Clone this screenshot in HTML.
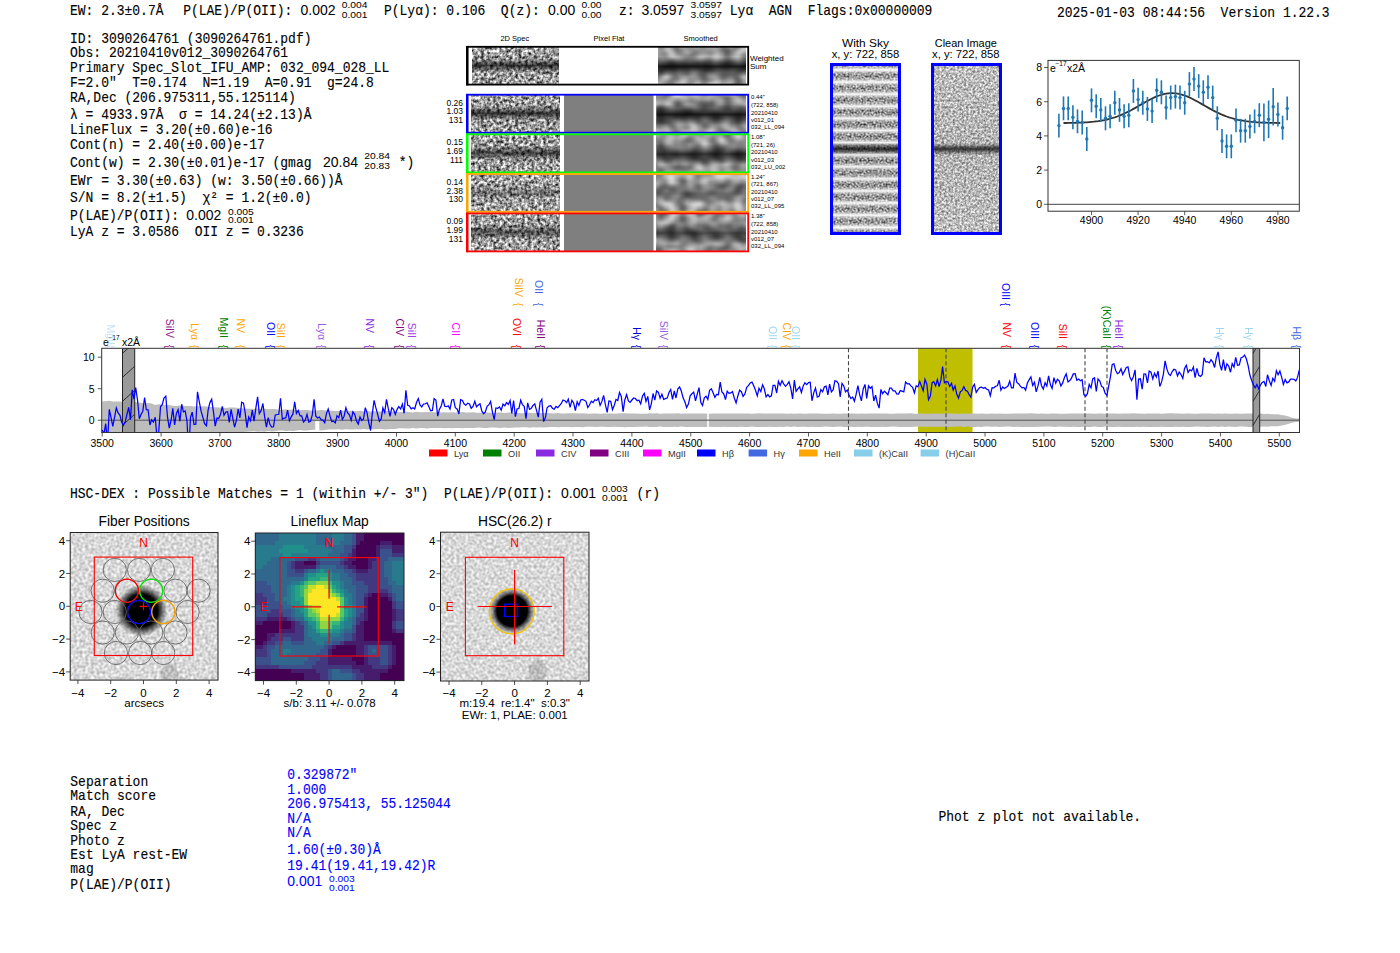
<!DOCTYPE html><html><head><meta charset="utf-8"><style>html,body{margin:0;padding:0;background:#fff;}svg{display:block} text{white-space:pre}</style></head><body>
<svg width="1400" height="953" viewBox="0 0 1400 953">
<rect width="1400" height="953" fill="#fff"/>
<text transform="translate(70,14.5) scale(1,1.09)" font-family="Liberation Mono, monospace" font-size="13" fill="#000" stroke="#000" stroke-width="0.12" >EW: 2.3±0.7Å</text><text transform="translate(183.2,14.5) scale(1,1.09)" font-family="Liberation Mono, monospace" font-size="13" fill="#000" stroke="#000" stroke-width="0.12" >P(LAE)/P(OII):</text><text x="300.5" y="14.5" font-family="Liberation Sans, sans-serif" font-size="14" fill="#000" text-anchor="start" >0.002</text><text x="341.7" y="8.0" font-family="Liberation Sans, sans-serif" font-size="9.5" fill="#000" text-anchor="start" textLength="25.8" lengthAdjust="spacingAndGlyphs">0.004</text><text x="341.7" y="17.7" font-family="Liberation Sans, sans-serif" font-size="9.5" fill="#000" text-anchor="start" textLength="25.8" lengthAdjust="spacingAndGlyphs">0.001</text><text transform="translate(384,14.5) scale(1,1.09)" font-family="Liberation Mono, monospace" font-size="13" fill="#000" stroke="#000" stroke-width="0.12" >P(Lyα): 0.106  Q(z):</text><text x="548" y="14.5" font-family="Liberation Sans, sans-serif" font-size="14" fill="#000" text-anchor="start" >0.00</text><text x="581.6" y="8.2" font-family="Liberation Sans, sans-serif" font-size="9.5" fill="#000" text-anchor="start" textLength="20.0" lengthAdjust="spacingAndGlyphs">0.00</text><text x="581.6" y="18.099999999999998" font-family="Liberation Sans, sans-serif" font-size="9.5" fill="#000" text-anchor="start" textLength="20.0" lengthAdjust="spacingAndGlyphs">0.00</text><text transform="translate(619,14.5) scale(1,1.09)" font-family="Liberation Mono, monospace" font-size="13" fill="#000" stroke="#000" stroke-width="0.12" >z:</text><text x="641.4" y="14.5" font-family="Liberation Sans, sans-serif" font-size="14" fill="#000" text-anchor="start" >3.0597</text><text x="690.5" y="8.2" font-family="Liberation Sans, sans-serif" font-size="9.5" fill="#000" text-anchor="start" textLength="31.5" lengthAdjust="spacingAndGlyphs">3.0597</text><text x="690.5" y="18.099999999999998" font-family="Liberation Sans, sans-serif" font-size="9.5" fill="#000" text-anchor="start" textLength="31.5" lengthAdjust="spacingAndGlyphs">3.0597</text><text transform="translate(729.8,14.5) scale(1,1.09)" font-family="Liberation Mono, monospace" font-size="13" fill="#000" stroke="#000" stroke-width="0.12" >Lyα  AGN  Flags:0x00000009</text><text transform="translate(1057,16.8) scale(1,1.09)" font-family="Liberation Mono, monospace" font-size="13" fill="#000" stroke="#000" stroke-width="0.12" >2025-01-03 08:44:56  Version 1.22.3</text><text transform="translate(70,42.6) scale(1,1.09)" font-family="Liberation Mono, monospace" font-size="13" fill="#000" stroke="#000" stroke-width="0.12" >ID: 3090264761 (3090264761.pdf)</text><text transform="translate(70,57.0) scale(1,1.09)" font-family="Liberation Mono, monospace" font-size="13" fill="#000" stroke="#000" stroke-width="0.12" >Obs: 20210410v012_3090264761</text><text transform="translate(70,71.8) scale(1,1.09)" font-family="Liberation Mono, monospace" font-size="13" fill="#000" stroke="#000" stroke-width="0.12" >Primary Spec_Slot_IFU_AMP: 032_094_028_LL</text><text transform="translate(70,86.7) scale(1,1.09)" font-family="Liberation Mono, monospace" font-size="13" fill="#000" stroke="#000" stroke-width="0.12" >F=2.0"  T=0.174  N=1.19  A=0.91  g=24.8</text><text transform="translate(70,101.5) scale(1,1.09)" font-family="Liberation Mono, monospace" font-size="13" fill="#000" stroke="#000" stroke-width="0.12" >RA,Dec (206.975311,55.125114)</text><text transform="translate(70,118.5) scale(1,1.09)" font-family="Liberation Mono, monospace" font-size="13" fill="#000" stroke="#000" stroke-width="0.12" >λ = 4933.97Å  σ = 14.24(±2.13)Å</text><text transform="translate(70,133.7) scale(1,1.09)" font-family="Liberation Mono, monospace" font-size="13" fill="#000" stroke="#000" stroke-width="0.12" >LineFlux = 3.20(±0.60)e-16</text><text transform="translate(70,148.5) scale(1,1.09)" font-family="Liberation Mono, monospace" font-size="13" fill="#000" stroke="#000" stroke-width="0.12" >Cont(n) = 2.40(±0.00)e-17</text><text transform="translate(70,166.7) scale(1,1.09)" font-family="Liberation Mono, monospace" font-size="13" fill="#000" stroke="#000" stroke-width="0.12" >Cont(w) = 2.30(±0.01)e-17 (gmag</text><text transform="translate(70,184.9) scale(1,1.09)" font-family="Liberation Mono, monospace" font-size="13" fill="#000" stroke="#000" stroke-width="0.12" >EWr = 3.30(±0.63) (w: 3.50(±0.66))Å</text><text transform="translate(70,202.0) scale(1,1.09)" font-family="Liberation Mono, monospace" font-size="13" fill="#000" stroke="#000" stroke-width="0.12" >S/N = 8.2(±1.5)  χ² = 1.2(±0.0)</text><text transform="translate(70,219.6) scale(1,1.09)" font-family="Liberation Mono, monospace" font-size="13" fill="#000" stroke="#000" stroke-width="0.12" >P(LAE)/P(OII):</text><text transform="translate(70,236.4) scale(1,1.09)" font-family="Liberation Mono, monospace" font-size="13" fill="#000" stroke="#000" stroke-width="0.12" >LyA z = 3.0586  OII z = 0.3236</text><text x="323" y="166.7" font-family="Liberation Sans, sans-serif" font-size="14" fill="#000" text-anchor="start" >20.84</text><text x="364.2" y="159.4" font-family="Liberation Sans, sans-serif" font-size="9.5" fill="#000" text-anchor="start" textLength="25.8" lengthAdjust="spacingAndGlyphs">20.84</text><text x="364.2" y="169.20000000000002" font-family="Liberation Sans, sans-serif" font-size="9.5" fill="#000" text-anchor="start" textLength="25.8" lengthAdjust="spacingAndGlyphs">20.83</text><text transform="translate(391,166.7) scale(1,1.09)" font-family="Liberation Mono, monospace" font-size="13" fill="#000" stroke="#000" stroke-width="0.12" > *)</text><text x="186.3" y="219.6" font-family="Liberation Sans, sans-serif" font-size="14" fill="#000" text-anchor="start" >0.002</text><text x="228" y="214.6" font-family="Liberation Sans, sans-serif" font-size="9.5" fill="#000" text-anchor="start" textLength="25.8" lengthAdjust="spacingAndGlyphs">0.005</text><text x="228" y="223.4" font-family="Liberation Sans, sans-serif" font-size="9.5" fill="#000" text-anchor="start" textLength="25.8" lengthAdjust="spacingAndGlyphs">0.001</text><defs>
<filter id="nz" x="0" y="0" width="1" height="1" color-interpolation-filters="sRGB">
 <feTurbulence type="fractalNoise" baseFrequency="0.32" numOctaves="2" seed="4"/>
 <feColorMatrix type="matrix" values="1 0 0 0 0 1 0 0 0 0 1 0 0 0 0 0 0 0 0 1"/>
 <feComponentTransfer><feFuncR type="linear" slope="1.7" intercept="-0.22"/><feFuncG type="linear" slope="1.7" intercept="-0.22"/><feFuncB type="linear" slope="1.7" intercept="-0.22"/></feComponentTransfer>
</filter>
<filter id="nzs" x="0" y="0" width="1" height="1" color-interpolation-filters="sRGB">
 <feTurbulence type="fractalNoise" baseFrequency="0.09 0.11" numOctaves="1" seed="9"/>
 <feColorMatrix type="matrix" values="1 0 0 0 0 1 0 0 0 0 1 0 0 0 0 0 0 0 0 1"/>
 <feComponentTransfer><feFuncR type="linear" slope="0.9" intercept="0.17"/><feFuncG type="linear" slope="0.9" intercept="0.17"/><feFuncB type="linear" slope="0.9" intercept="0.17"/></feComponentTransfer>
</filter>
<filter id="nzf" x="0" y="0" width="1" height="1" color-interpolation-filters="sRGB">
 <feTurbulence type="fractalNoise" baseFrequency="0.45" numOctaves="2" seed="2"/>
 <feColorMatrix type="matrix" values="1 0 0 0 0 1 0 0 0 0 1 0 0 0 0 0 0 0 0 1"/>
 <feComponentTransfer><feFuncR type="linear" slope="0.95" intercept="0.27"/><feFuncG type="linear" slope="0.95" intercept="0.27"/><feFuncB type="linear" slope="0.95" intercept="0.27"/></feComponentTransfer>
</filter>
<filter id="nzk" x="0" y="0" width="1" height="1" color-interpolation-filters="sRGB">
 <feTurbulence type="fractalNoise" baseFrequency="0.5" numOctaves="1" seed="6"/>
 <feColorMatrix type="matrix" values="1 0 0 0 0 1 0 0 0 0 1 0 0 0 0 0 0 0 0 1"/>
 <feComponentTransfer><feFuncR type="linear" slope="1.3" intercept="-0.1"/><feFuncG type="linear" slope="1.3" intercept="-0.1"/><feFuncB type="linear" slope="1.3" intercept="-0.1"/></feComponentTransfer>
</filter>
<linearGradient id="band" x1="0" y1="0" x2="0" y2="1">
 <stop offset="0" stop-color="#000" stop-opacity="0"/>
 <stop offset="0.3" stop-color="#000" stop-opacity="0.05"/>
 <stop offset="0.49" stop-color="#000" stop-opacity="0.72"/>
 <stop offset="0.68" stop-color="#000" stop-opacity="0.05"/>
 <stop offset="1" stop-color="#000" stop-opacity="0"/>
</linearGradient>
<linearGradient id="bandS" x1="0" y1="0" x2="0" y2="1">
 <stop offset="0" stop-color="#000" stop-opacity="0"/>
 <stop offset="0.25" stop-color="#000" stop-opacity="0.08"/>
 <stop offset="0.4" stop-color="#000" stop-opacity="0.55"/>
 <stop offset="0.52" stop-color="#000" stop-opacity="0.85"/>
 <stop offset="0.64" stop-color="#000" stop-opacity="0.55"/>
 <stop offset="0.8" stop-color="#000" stop-opacity="0.08"/>
 <stop offset="1" stop-color="#000" stop-opacity="0"/>
</linearGradient>
<linearGradient id="bandW" x1="0" y1="0" x2="0" y2="1">
 <stop offset="0" stop-color="#000" stop-opacity="0"/>
 <stop offset="0.465" stop-color="#000" stop-opacity="0.05"/>
 <stop offset="0.5" stop-color="#000" stop-opacity="0.75"/>
 <stop offset="0.535" stop-color="#000" stop-opacity="0.05"/>
 <stop offset="1" stop-color="#000" stop-opacity="0"/>
</linearGradient>
<linearGradient id="sky" gradientUnits="userSpaceOnUse" x1="0" y1="76" x2="0" y2="88.1" spreadMethod="repeat">
 <stop offset="0" stop-color="#fff" stop-opacity="0"/>
 <stop offset="0.25" stop-color="#fff" stop-opacity="0.3"/>
 <stop offset="0.5" stop-color="#fff" stop-opacity="1"/>
 <stop offset="0.75" stop-color="#fff" stop-opacity="0.3"/>
 <stop offset="1" stop-color="#fff" stop-opacity="0"/>
</linearGradient>
</defs><text x="514.8" y="41.3" font-family="Liberation Sans, sans-serif" font-size="7.5" fill="#000" text-anchor="middle" >2D Spec</text><text x="609" y="41.3" font-family="Liberation Sans, sans-serif" font-size="7.5" fill="#000" text-anchor="middle" >Pixel Flat</text><text x="700.7" y="41.3" font-family="Liberation Sans, sans-serif" font-size="7.5" fill="#000" text-anchor="middle" >Smoothed</text><rect x="472" y="47.5" width="87" height="36.5" filter="url(#nz)"/><rect x="472" y="47.5" width="87" height="36.5" fill="url(#band)" opacity="1.0"/><rect x="658" y="47.5" width="88" height="36.5" filter="url(#nzs)"/><rect x="658" y="47.5" width="88" height="36.5" fill="url(#bandS)" opacity="1.0"/><rect x="467.2" y="46.8" width="281" height="37.8" fill="none" stroke="#000" stroke-width="1.8"/><rect x="466" y="46" width="2.5" height="39.4" fill="#000"/><text x="750" y="60.6" font-family="Liberation Sans, sans-serif" font-size="8" fill="#000" text-anchor="start" >Weighted</text><text x="750" y="69.1" font-family="Liberation Sans, sans-serif" font-size="8" fill="#000" text-anchor="start" >Sum</text><rect x="471" y="94.9" width="89" height="37.599999999999994" filter="url(#nz)"/><rect x="471" y="94.9" width="89" height="37.599999999999994" fill="url(#band)" opacity="1.0"/><rect x="564" y="94.9" width="89.5" height="37.599999999999994" fill="#7f7f7f"/><rect x="656.5" y="94.9" width="89.5" height="37.599999999999994" filter="url(#nzs)"/><rect x="656.5" y="94.9" width="89.5" height="37.599999999999994" fill="url(#bandS)" opacity="1.0"/><rect x="471" y="134.5" width="89" height="37.69999999999999" filter="url(#nz)"/><rect x="471" y="134.5" width="89" height="37.69999999999999" fill="url(#band)" opacity="0.9"/><rect x="564" y="134.5" width="89.5" height="37.69999999999999" fill="#7f7f7f"/><rect x="656.5" y="134.5" width="89.5" height="37.69999999999999" filter="url(#nzs)"/><rect x="656.5" y="134.5" width="89.5" height="37.69999999999999" fill="url(#bandS)" opacity="0.9"/><rect x="471" y="174.2" width="89" height="37.400000000000006" filter="url(#nz)"/><rect x="471" y="174.2" width="89" height="37.400000000000006" fill="url(#band)" opacity="0.45"/><rect x="564" y="174.2" width="89.5" height="37.400000000000006" fill="#7f7f7f"/><rect x="656.5" y="174.2" width="89.5" height="37.400000000000006" filter="url(#nzs)"/><rect x="656.5" y="174.2" width="89.5" height="37.400000000000006" fill="url(#bandS)" opacity="0.45"/><rect x="471" y="213.6" width="89" height="37.599999999999994" filter="url(#nz)"/><rect x="471" y="213.6" width="89" height="37.599999999999994" fill="url(#band)" opacity="0.75"/><rect x="564" y="213.6" width="89.5" height="37.599999999999994" fill="#7f7f7f"/><rect x="656.5" y="213.6" width="89.5" height="37.599999999999994" filter="url(#nzs)"/><rect x="656.5" y="213.6" width="89.5" height="37.599999999999994" fill="url(#bandS)" opacity="0.75"/><rect x="467.2" y="94.7" width="281" height="37.99999999999999" fill="none" stroke="#0000ff" stroke-width="1.8"/><rect x="466" y="93.9" width="2.5" height="39.599999999999994" fill="#0000ff"/><text x="463" y="105.60000000000001" font-family="Liberation Sans, sans-serif" font-size="8.5" fill="#000" text-anchor="end" >0.26</text><text x="463" y="114.30000000000001" font-family="Liberation Sans, sans-serif" font-size="8.5" fill="#000" text-anchor="end" >1.03</text><text x="463" y="123.0" font-family="Liberation Sans, sans-serif" font-size="8.5" fill="#000" text-anchor="end" >131</text><text x="751" y="99.4" font-family="Liberation Sans, sans-serif" font-size="6" fill="#000" text-anchor="start" >0.44"</text><text x="751" y="107.0" font-family="Liberation Sans, sans-serif" font-size="6" fill="#000" text-anchor="start" >(722, 858)</text><text x="751" y="114.80000000000001" font-family="Liberation Sans, sans-serif" font-size="6" fill="#000" text-anchor="start" >20210410</text><text x="751" y="122.0" font-family="Liberation Sans, sans-serif" font-size="6" fill="#000" text-anchor="start" >v012_01</text><text x="751" y="129.0" font-family="Liberation Sans, sans-serif" font-size="6" fill="#000" text-anchor="start" >032_LL_094</text><rect x="467.2" y="134.3" width="281" height="38.09999999999999" fill="none" stroke="#00ff00" stroke-width="1.8"/><rect x="466" y="133.5" width="2.5" height="39.69999999999999" fill="#00ff00"/><text x="463" y="145.2" font-family="Liberation Sans, sans-serif" font-size="8.5" fill="#000" text-anchor="end" >0.15</text><text x="463" y="153.89999999999998" font-family="Liberation Sans, sans-serif" font-size="8.5" fill="#000" text-anchor="end" >1.69</text><text x="463" y="162.6" font-family="Liberation Sans, sans-serif" font-size="8.5" fill="#000" text-anchor="end" >111</text><text x="751" y="139.0" font-family="Liberation Sans, sans-serif" font-size="6" fill="#000" text-anchor="start" >1.08"</text><text x="751" y="146.6" font-family="Liberation Sans, sans-serif" font-size="6" fill="#000" text-anchor="start" >(721, 26)</text><text x="751" y="154.4" font-family="Liberation Sans, sans-serif" font-size="6" fill="#000" text-anchor="start" >20210410</text><text x="751" y="161.6" font-family="Liberation Sans, sans-serif" font-size="6" fill="#000" text-anchor="start" >v012_03</text><text x="751" y="168.6" font-family="Liberation Sans, sans-serif" font-size="6" fill="#000" text-anchor="start" >032_LU_002</text><rect x="467.2" y="174.0" width="281" height="37.800000000000004" fill="none" stroke="#ffa500" stroke-width="1.8"/><rect x="466" y="173.2" width="2.5" height="39.400000000000006" fill="#ffa500"/><text x="463" y="184.89999999999998" font-family="Liberation Sans, sans-serif" font-size="8.5" fill="#000" text-anchor="end" >0.14</text><text x="463" y="193.59999999999997" font-family="Liberation Sans, sans-serif" font-size="8.5" fill="#000" text-anchor="end" >2.38</text><text x="463" y="202.29999999999998" font-family="Liberation Sans, sans-serif" font-size="8.5" fill="#000" text-anchor="end" >130</text><text x="751" y="178.7" font-family="Liberation Sans, sans-serif" font-size="6" fill="#000" text-anchor="start" >1.24"</text><text x="751" y="186.29999999999998" font-family="Liberation Sans, sans-serif" font-size="6" fill="#000" text-anchor="start" >(721, 867)</text><text x="751" y="194.1" font-family="Liberation Sans, sans-serif" font-size="6" fill="#000" text-anchor="start" >20210410</text><text x="751" y="201.29999999999998" font-family="Liberation Sans, sans-serif" font-size="6" fill="#000" text-anchor="start" >v012_07</text><text x="751" y="208.29999999999998" font-family="Liberation Sans, sans-serif" font-size="6" fill="#000" text-anchor="start" >032_LL_095</text><rect x="467.2" y="213.4" width="281" height="37.99999999999999" fill="none" stroke="#ff0000" stroke-width="1.8"/><rect x="466" y="212.6" width="2.5" height="39.599999999999994" fill="#ff0000"/><text x="463" y="224.29999999999998" font-family="Liberation Sans, sans-serif" font-size="8.5" fill="#000" text-anchor="end" >0.09</text><text x="463" y="232.99999999999997" font-family="Liberation Sans, sans-serif" font-size="8.5" fill="#000" text-anchor="end" >1.99</text><text x="463" y="241.7" font-family="Liberation Sans, sans-serif" font-size="8.5" fill="#000" text-anchor="end" >131</text><text x="751" y="218.1" font-family="Liberation Sans, sans-serif" font-size="6" fill="#000" text-anchor="start" >1.38"</text><text x="751" y="225.7" font-family="Liberation Sans, sans-serif" font-size="6" fill="#000" text-anchor="start" >(722, 858)</text><text x="751" y="233.5" font-family="Liberation Sans, sans-serif" font-size="6" fill="#000" text-anchor="start" >20210410</text><text x="751" y="240.7" font-family="Liberation Sans, sans-serif" font-size="6" fill="#000" text-anchor="start" >v012_07</text><text x="751" y="247.7" font-family="Liberation Sans, sans-serif" font-size="6" fill="#000" text-anchor="start" >032_LL_094</text><text x="865.4" y="47.3" font-family="Liberation Sans, sans-serif" font-size="11" fill="#000" text-anchor="middle" textLength="47" lengthAdjust="spacingAndGlyphs">With Sky</text><text x="865.4" y="57.7" font-family="Liberation Sans, sans-serif" font-size="11" fill="#000" text-anchor="middle" textLength="67.5" lengthAdjust="spacingAndGlyphs">x, y: 722, 858</text><text x="965.8" y="47.3" font-family="Liberation Sans, sans-serif" font-size="11" fill="#000" text-anchor="middle" textLength="62" lengthAdjust="spacingAndGlyphs">Clean Image</text><text x="965.8" y="57.7" font-family="Liberation Sans, sans-serif" font-size="11" fill="#000" text-anchor="middle" textLength="67.5" lengthAdjust="spacingAndGlyphs">x, y: 722, 858</text><rect x="832" y="65" width="67" height="168" filter="url(#nzk)"/><rect x="832" y="65" width="67" height="168" fill="url(#sky)"/><rect x="832" y="65" width="67" height="168" fill="url(#bandW)"/><rect x="831.5" y="64.5" width="68" height="169" fill="none" stroke="#0000ff" stroke-width="3"/><rect x="932.5" y="65" width="67" height="168" filter="url(#nzf)"/><rect x="932.5" y="65" width="67" height="168" fill="url(#bandW)"/><rect x="932.5" y="64.5" width="68" height="169" fill="none" stroke="#0000ff" stroke-width="3"/><rect x="1048" y="60.4" width="251.29999999999995" height="150.79999999999998" fill="#fff" stroke="#333" stroke-width="1"/><line x1="1048" y1="204.3" x2="1299.3" y2="204.3" stroke="#444" stroke-width="1"/><line x1="1044" y1="204.3" x2="1048" y2="204.3" stroke="#333" stroke-width="0.8"/><text x="1042" y="208.10000000000002" font-family="Liberation Sans, sans-serif" font-size="10.5" fill="#000" text-anchor="end" >0</text><line x1="1044" y1="170.10000000000002" x2="1048" y2="170.10000000000002" stroke="#333" stroke-width="0.8"/><text x="1042" y="173.90000000000003" font-family="Liberation Sans, sans-serif" font-size="10.5" fill="#000" text-anchor="end" >2</text><line x1="1044" y1="135.9" x2="1048" y2="135.9" stroke="#333" stroke-width="0.8"/><text x="1042" y="139.70000000000002" font-family="Liberation Sans, sans-serif" font-size="10.5" fill="#000" text-anchor="end" >4</text><line x1="1044" y1="101.7" x2="1048" y2="101.7" stroke="#333" stroke-width="0.8"/><text x="1042" y="105.5" font-family="Liberation Sans, sans-serif" font-size="10.5" fill="#000" text-anchor="end" >6</text><line x1="1044" y1="67.5" x2="1048" y2="67.5" stroke="#333" stroke-width="0.8"/><text x="1042" y="71.3" font-family="Liberation Sans, sans-serif" font-size="10.5" fill="#000" text-anchor="end" >8</text><line x1="1091.5" y1="211.2" x2="1091.5" y2="215.2" stroke="#333" stroke-width="0.8"/><text x="1091.5" y="224" font-family="Liberation Sans, sans-serif" font-size="10.5" fill="#000" text-anchor="middle" >4900</text><line x1="1138.1" y1="211.2" x2="1138.1" y2="215.2" stroke="#333" stroke-width="0.8"/><text x="1138.1" y="224" font-family="Liberation Sans, sans-serif" font-size="10.5" fill="#000" text-anchor="middle" >4920</text><line x1="1184.7" y1="211.2" x2="1184.7" y2="215.2" stroke="#333" stroke-width="0.8"/><text x="1184.7" y="224" font-family="Liberation Sans, sans-serif" font-size="10.5" fill="#000" text-anchor="middle" >4940</text><line x1="1231.3" y1="211.2" x2="1231.3" y2="215.2" stroke="#333" stroke-width="0.8"/><text x="1231.3" y="224" font-family="Liberation Sans, sans-serif" font-size="10.5" fill="#000" text-anchor="middle" >4960</text><line x1="1277.9" y1="211.2" x2="1277.9" y2="215.2" stroke="#333" stroke-width="0.8"/><text x="1277.9" y="224" font-family="Liberation Sans, sans-serif" font-size="10.5" fill="#000" text-anchor="middle" >4980</text><polyline points="1063.5,123.0 1065.9,123.0 1068.2,122.9 1070.5,122.9 1072.9,122.9 1075.2,122.8 1077.5,122.7 1079.8,122.7 1082.2,122.6 1084.5,122.4 1086.8,122.3 1089.2,122.1 1091.5,121.9 1093.8,121.7 1096.2,121.4 1098.5,121.1 1100.8,120.7 1103.2,120.3 1105.5,119.9 1107.8,119.3 1110.1,118.7 1112.5,118.0 1114.8,117.3 1117.1,116.5 1119.5,115.6 1121.8,114.7 1124.1,113.6 1126.5,112.5 1128.8,111.4 1131.1,110.2 1133.4,108.9 1135.8,107.6 1138.1,106.3 1140.4,104.9 1142.8,103.6 1145.1,102.3 1147.4,101.0 1149.8,99.7 1152.1,98.5 1154.4,97.4 1156.7,96.4 1159.1,95.5 1161.4,94.8 1163.7,94.1 1166.1,93.7 1168.4,93.3 1170.7,93.2 1173.0,93.2 1175.4,93.3 1177.7,93.7 1180.0,94.1 1182.4,94.8 1184.7,95.5 1187.0,96.4 1189.4,97.4 1191.7,98.5 1194.0,99.7 1196.3,101.0 1198.7,102.3 1201.0,103.6 1203.3,104.9 1205.7,106.3 1208.0,107.6 1210.3,108.9 1212.7,110.2 1215.0,111.4 1217.3,112.5 1219.7,113.6 1222.0,114.7 1224.3,115.6 1226.6,116.5 1229.0,117.3 1231.3,118.0 1233.6,118.7 1236.0,119.3 1238.3,119.9 1240.6,120.3 1243.0,120.7 1245.3,121.1 1247.6,121.4 1249.9,121.7 1252.3,121.9 1254.6,122.1 1256.9,122.3 1259.3,122.4 1261.6,122.6 1263.9,122.7 1266.2,122.7 1268.6,122.8 1270.9,122.9 1273.2,122.9 1275.6,122.9 1277.9,123.0 1280.2,123.0" fill="none" stroke="#333" stroke-width="1.8"/><line x1="1058.9" y1="113.7" x2="1058.9" y2="137.6" stroke="#1f77b4" stroke-width="1.6"/><circle cx="1058.9" cy="125.6" r="1.7" fill="#1f77b4"/><line x1="1063.5" y1="96.4" x2="1063.5" y2="120.3" stroke="#1f77b4" stroke-width="1.6"/><circle cx="1063.5" cy="108.4" r="1.7" fill="#1f77b4"/><line x1="1068.2" y1="96.4" x2="1068.2" y2="120.3" stroke="#1f77b4" stroke-width="1.6"/><circle cx="1068.2" cy="108.4" r="1.7" fill="#1f77b4"/><line x1="1072.9" y1="105.3" x2="1072.9" y2="129.2" stroke="#1f77b4" stroke-width="1.6"/><circle cx="1072.9" cy="117.3" r="1.7" fill="#1f77b4"/><line x1="1077.5" y1="109.4" x2="1077.5" y2="133.3" stroke="#1f77b4" stroke-width="1.6"/><circle cx="1077.5" cy="121.4" r="1.7" fill="#1f77b4"/><line x1="1082.2" y1="110.4" x2="1082.2" y2="134.4" stroke="#1f77b4" stroke-width="1.6"/><circle cx="1082.2" cy="122.4" r="1.7" fill="#1f77b4"/><line x1="1086.8" y1="127.0" x2="1086.8" y2="150.9" stroke="#1f77b4" stroke-width="1.6"/><circle cx="1086.8" cy="139.0" r="1.7" fill="#1f77b4"/><line x1="1091.5" y1="88.4" x2="1091.5" y2="112.3" stroke="#1f77b4" stroke-width="1.6"/><circle cx="1091.5" cy="100.3" r="1.7" fill="#1f77b4"/><line x1="1096.2" y1="94.3" x2="1096.2" y2="118.3" stroke="#1f77b4" stroke-width="1.6"/><circle cx="1096.2" cy="106.3" r="1.7" fill="#1f77b4"/><line x1="1100.8" y1="97.9" x2="1100.8" y2="121.9" stroke="#1f77b4" stroke-width="1.6"/><circle cx="1100.8" cy="109.9" r="1.7" fill="#1f77b4"/><line x1="1105.5" y1="106.3" x2="1105.5" y2="130.3" stroke="#1f77b4" stroke-width="1.6"/><circle cx="1105.5" cy="118.3" r="1.7" fill="#1f77b4"/><line x1="1110.1" y1="104.3" x2="1110.1" y2="128.2" stroke="#1f77b4" stroke-width="1.6"/><circle cx="1110.1" cy="116.2" r="1.7" fill="#1f77b4"/><line x1="1114.8" y1="90.8" x2="1114.8" y2="114.7" stroke="#1f77b4" stroke-width="1.6"/><circle cx="1114.8" cy="102.7" r="1.7" fill="#1f77b4"/><line x1="1119.5" y1="97.9" x2="1119.5" y2="121.9" stroke="#1f77b4" stroke-width="1.6"/><circle cx="1119.5" cy="109.9" r="1.7" fill="#1f77b4"/><line x1="1124.1" y1="104.3" x2="1124.1" y2="128.2" stroke="#1f77b4" stroke-width="1.6"/><circle cx="1124.1" cy="116.2" r="1.7" fill="#1f77b4"/><line x1="1128.8" y1="103.2" x2="1128.8" y2="127.2" stroke="#1f77b4" stroke-width="1.6"/><circle cx="1128.8" cy="115.2" r="1.7" fill="#1f77b4"/><line x1="1133.4" y1="79.0" x2="1133.4" y2="102.9" stroke="#1f77b4" stroke-width="1.6"/><circle cx="1133.4" cy="90.9" r="1.7" fill="#1f77b4"/><line x1="1138.1" y1="87.7" x2="1138.1" y2="111.6" stroke="#1f77b4" stroke-width="1.6"/><circle cx="1138.1" cy="99.6" r="1.7" fill="#1f77b4"/><line x1="1142.8" y1="90.8" x2="1142.8" y2="114.7" stroke="#1f77b4" stroke-width="1.6"/><circle cx="1142.8" cy="102.7" r="1.7" fill="#1f77b4"/><line x1="1147.4" y1="96.9" x2="1147.4" y2="120.9" stroke="#1f77b4" stroke-width="1.6"/><circle cx="1147.4" cy="108.9" r="1.7" fill="#1f77b4"/><line x1="1152.1" y1="99.1" x2="1152.1" y2="123.1" stroke="#1f77b4" stroke-width="1.6"/><circle cx="1152.1" cy="111.1" r="1.7" fill="#1f77b4"/><line x1="1156.7" y1="78.3" x2="1156.7" y2="102.2" stroke="#1f77b4" stroke-width="1.6"/><circle cx="1156.7" cy="90.2" r="1.7" fill="#1f77b4"/><line x1="1161.4" y1="80.3" x2="1161.4" y2="104.3" stroke="#1f77b4" stroke-width="1.6"/><circle cx="1161.4" cy="92.3" r="1.7" fill="#1f77b4"/><line x1="1166.1" y1="95.5" x2="1166.1" y2="119.5" stroke="#1f77b4" stroke-width="1.6"/><circle cx="1166.1" cy="107.5" r="1.7" fill="#1f77b4"/><line x1="1170.7" y1="85.6" x2="1170.7" y2="109.6" stroke="#1f77b4" stroke-width="1.6"/><circle cx="1170.7" cy="97.6" r="1.7" fill="#1f77b4"/><line x1="1175.4" y1="84.6" x2="1175.4" y2="108.5" stroke="#1f77b4" stroke-width="1.6"/><circle cx="1175.4" cy="96.6" r="1.7" fill="#1f77b4"/><line x1="1180.0" y1="85.6" x2="1180.0" y2="109.6" stroke="#1f77b4" stroke-width="1.6"/><circle cx="1180.0" cy="97.6" r="1.7" fill="#1f77b4"/><line x1="1184.7" y1="90.8" x2="1184.7" y2="114.7" stroke="#1f77b4" stroke-width="1.6"/><circle cx="1184.7" cy="102.7" r="1.7" fill="#1f77b4"/><line x1="1189.4" y1="72.1" x2="1189.4" y2="96.1" stroke="#1f77b4" stroke-width="1.6"/><circle cx="1189.4" cy="84.1" r="1.7" fill="#1f77b4"/><line x1="1194.0" y1="67.0" x2="1194.0" y2="90.9" stroke="#1f77b4" stroke-width="1.6"/><circle cx="1194.0" cy="79.0" r="1.7" fill="#1f77b4"/><line x1="1198.7" y1="74.2" x2="1198.7" y2="98.1" stroke="#1f77b4" stroke-width="1.6"/><circle cx="1198.7" cy="86.1" r="1.7" fill="#1f77b4"/><line x1="1203.3" y1="80.3" x2="1203.3" y2="104.3" stroke="#1f77b4" stroke-width="1.6"/><circle cx="1203.3" cy="92.3" r="1.7" fill="#1f77b4"/><line x1="1208.0" y1="75.2" x2="1208.0" y2="99.1" stroke="#1f77b4" stroke-width="1.6"/><circle cx="1208.0" cy="87.2" r="1.7" fill="#1f77b4"/><line x1="1212.7" y1="85.6" x2="1212.7" y2="109.6" stroke="#1f77b4" stroke-width="1.6"/><circle cx="1212.7" cy="97.6" r="1.7" fill="#1f77b4"/><line x1="1217.3" y1="106.3" x2="1217.3" y2="130.3" stroke="#1f77b4" stroke-width="1.6"/><circle cx="1217.3" cy="118.3" r="1.7" fill="#1f77b4"/><line x1="1222.0" y1="129.1" x2="1222.0" y2="153.0" stroke="#1f77b4" stroke-width="1.6"/><circle cx="1222.0" cy="141.0" r="1.7" fill="#1f77b4"/><line x1="1226.6" y1="134.4" x2="1226.6" y2="158.3" stroke="#1f77b4" stroke-width="1.6"/><circle cx="1226.6" cy="146.3" r="1.7" fill="#1f77b4"/><line x1="1231.3" y1="134.4" x2="1231.3" y2="158.3" stroke="#1f77b4" stroke-width="1.6"/><circle cx="1231.3" cy="146.3" r="1.7" fill="#1f77b4"/><line x1="1236.0" y1="108.4" x2="1236.0" y2="132.3" stroke="#1f77b4" stroke-width="1.6"/><circle cx="1236.0" cy="120.3" r="1.7" fill="#1f77b4"/><line x1="1240.6" y1="118.8" x2="1240.6" y2="142.7" stroke="#1f77b4" stroke-width="1.6"/><circle cx="1240.6" cy="130.8" r="1.7" fill="#1f77b4"/><line x1="1245.3" y1="118.8" x2="1245.3" y2="142.7" stroke="#1f77b4" stroke-width="1.6"/><circle cx="1245.3" cy="130.8" r="1.7" fill="#1f77b4"/><line x1="1249.9" y1="114.5" x2="1249.9" y2="138.5" stroke="#1f77b4" stroke-width="1.6"/><circle cx="1249.9" cy="126.5" r="1.7" fill="#1f77b4"/><line x1="1254.6" y1="109.4" x2="1254.6" y2="133.3" stroke="#1f77b4" stroke-width="1.6"/><circle cx="1254.6" cy="121.4" r="1.7" fill="#1f77b4"/><line x1="1259.3" y1="103.2" x2="1259.3" y2="127.2" stroke="#1f77b4" stroke-width="1.6"/><circle cx="1259.3" cy="115.2" r="1.7" fill="#1f77b4"/><line x1="1263.9" y1="103.6" x2="1263.9" y2="141.2" stroke="#1f77b4" stroke-width="1.6"/><circle cx="1263.9" cy="122.4" r="1.7" fill="#1f77b4"/><line x1="1268.6" y1="100.5" x2="1268.6" y2="138.1" stroke="#1f77b4" stroke-width="1.6"/><circle cx="1268.6" cy="119.3" r="1.7" fill="#1f77b4"/><line x1="1273.2" y1="88.0" x2="1273.2" y2="125.6" stroke="#1f77b4" stroke-width="1.6"/><circle cx="1273.2" cy="106.8" r="1.7" fill="#1f77b4"/><line x1="1277.9" y1="102.6" x2="1277.9" y2="126.5" stroke="#1f77b4" stroke-width="1.6"/><circle cx="1277.9" cy="114.5" r="1.7" fill="#1f77b4"/><line x1="1282.6" y1="115.7" x2="1282.6" y2="139.7" stroke="#1f77b4" stroke-width="1.6"/><circle cx="1282.6" cy="127.7" r="1.7" fill="#1f77b4"/><line x1="1287.2" y1="96.4" x2="1287.2" y2="120.3" stroke="#1f77b4" stroke-width="1.6"/><circle cx="1287.2" cy="108.4" r="1.7" fill="#1f77b4"/><text x="1050" y="72" font-family="Liberation Sans, sans-serif" font-size="10.5" fill="#000" text-anchor="start" >e</text><text x="1055.5" y="66" font-family="Liberation Sans, sans-serif" font-size="6.5" fill="#000" text-anchor="start" >−17</text><text x="1067" y="72" font-family="Liberation Sans, sans-serif" font-size="10.5" fill="#000" text-anchor="start" >x2Å</text><clipPath id="spc"><rect x="101.7" y="348.3" width="1197.8" height="84.19999999999999"/></clipPath><rect x="101.7" y="348.3" width="1197.8" height="84.19999999999999" fill="#fff"/><g clip-path="url(#spc)"><rect x="918" y="348.3" width="54.5" height="84.19999999999999" fill="#bfbf00"/><polygon points="102.2,401.4 105.7,401.3 109.3,400.8 112.8,401.5 116.3,401.5 119.9,401.5 123.4,402.1 126.9,401.7 130.5,401.6 134.0,401.4 137.5,402.5 141.0,402.7 144.6,403.4 148.1,402.9 151.6,403.6 155.2,404.9 158.7,404.2 162.2,404.5 165.8,405.0 169.3,405.1 172.8,405.7 176.4,406.0 179.9,405.4 183.4,406.1 187.0,406.0 190.5,406.0 194.0,406.5 197.5,406.2 201.1,406.5 204.6,406.2 208.1,406.8 211.7,406.9 215.2,407.3 218.7,407.4 222.3,407.7 225.8,408.0 229.3,407.4 232.9,407.5 236.4,407.8 239.9,408.0 243.5,408.5 247.0,408.7 250.5,408.8 254.0,409.1 257.6,408.6 261.1,409.0 264.6,408.7 268.2,409.3 271.7,408.9 275.2,409.1 278.8,409.9 282.3,409.8 285.8,409.3 289.4,409.7 292.9,409.4 296.4,410.0 300.0,410.3 303.5,409.9 307.0,409.9 310.5,410.4 314.1,410.6 317.6,410.5 321.1,410.0 324.7,410.3 328.2,410.8 331.7,410.8 335.3,411.0 338.8,411.1 342.3,410.6 345.9,411.1 349.4,410.8 352.9,411.0 356.5,411.2 360.0,410.8 363.5,411.3 367.0,411.0 370.6,411.4 374.1,411.2 377.6,411.4 381.2,411.4 384.7,410.9 388.2,411.1 391.8,411.5 395.3,411.3 398.8,412.2 402.4,412.1 405.9,411.8 409.4,412.0 413.0,412.4 416.5,411.8 420.0,412.3 423.5,412.3 427.1,412.0 430.6,412.3 434.1,412.3 437.7,412.5 441.2,412.5 444.7,412.2 448.3,412.4 451.8,412.2 455.3,412.4 458.9,412.4 462.4,412.1 465.9,412.4 469.5,412.4 473.0,412.3 476.5,412.7 480.0,412.8 483.6,412.3 487.1,412.4 490.6,412.8 494.2,412.9 497.7,412.6 501.2,412.5 504.8,413.0 508.3,412.5 511.8,412.6 515.4,412.8 518.9,412.9 522.4,413.2 526.0,413.2 529.5,412.7 533.0,413.2 536.5,412.9 540.1,413.2 543.6,412.9 547.1,413.1 550.7,413.3 554.2,413.4 557.7,413.1 561.3,413.5 564.8,413.5 568.3,413.3 571.9,413.2 575.4,413.3 578.9,413.5 582.5,413.2 586.0,413.6 589.5,413.7 593.1,413.6 596.6,413.5 600.1,413.7 603.6,413.6 607.2,413.5 610.7,413.4 614.2,413.7 617.8,413.5 621.3,413.3 624.8,413.2 628.4,413.4 631.9,413.4 635.4,413.4 639.0,413.7 642.5,413.7 646.0,413.8 649.6,413.3 653.1,413.4 656.6,413.3 660.1,413.8 663.7,413.5 667.2,413.5 670.7,413.4 674.3,413.6 677.8,413.3 681.3,413.8 684.9,413.5 688.4,413.4 691.9,413.4 695.5,413.4 699.0,413.5 702.5,413.4 706.1,413.4 709.6,413.7 713.1,413.5 716.6,413.4 720.2,413.4 723.7,413.6 727.2,413.4 730.8,413.4 734.3,413.5 737.8,413.5 741.4,413.6 744.9,413.5 748.4,413.5 752.0,413.8 755.5,413.5 759.0,413.3 762.6,413.4 766.1,413.5 769.6,413.6 773.1,413.5 776.7,413.5 780.2,413.6 783.7,413.4 787.3,413.8 790.8,413.5 794.3,413.8 797.9,413.5 801.4,413.6 804.9,413.7 808.5,413.5 812.0,413.6 815.5,413.5 819.1,413.4 822.6,413.7 826.1,413.8 829.6,413.7 833.2,413.5 836.7,413.7 840.2,413.8 843.8,413.4 847.3,413.5 850.8,413.6 854.4,413.4 857.9,413.7 861.4,413.5 865.0,413.7 868.5,413.6 872.0,413.4 875.6,413.4 879.1,413.4 882.6,413.6 886.1,413.5 889.7,413.7 893.2,413.8 896.7,413.6 900.3,413.4 903.8,413.4 907.3,413.5 910.9,413.3 914.4,413.7 917.9,413.8 921.5,413.6 925.0,413.7 928.5,413.7 932.1,413.6 935.6,413.5 939.1,413.6 942.6,413.7 946.2,413.4 949.7,413.3 953.2,413.6 956.8,413.8 960.3,413.8 963.8,413.4 967.4,413.8 970.9,413.5 974.4,413.5 978.0,413.7 981.5,413.4 985.0,413.8 988.6,413.8 992.1,413.6 995.6,413.8 999.2,413.4 1002.7,413.7 1006.2,413.8 1009.7,413.8 1013.3,413.5 1016.8,413.6 1020.3,413.5 1023.9,413.5 1027.4,413.4 1030.9,413.3 1034.5,413.5 1038.0,413.7 1041.5,413.6 1045.1,413.8 1048.6,413.8 1052.1,413.6 1055.7,413.5 1059.2,413.8 1062.7,413.7 1066.2,413.7 1069.8,413.5 1073.3,413.6 1076.8,413.5 1080.4,413.4 1083.9,413.6 1087.4,413.4 1091.0,413.4 1094.5,413.8 1098.0,413.4 1101.6,413.5 1105.1,413.8 1108.6,413.6 1112.2,413.5 1115.7,413.4 1119.2,413.7 1122.7,413.5 1126.3,413.4 1129.8,413.4 1133.3,413.3 1136.9,413.6 1140.4,413.5 1143.9,413.7 1147.5,413.5 1151.0,413.4 1154.5,413.5 1158.1,413.5 1161.6,413.7 1165.1,413.4 1168.7,413.3 1172.2,413.3 1175.7,413.6 1179.2,413.4 1182.8,413.7 1186.3,413.4 1189.8,413.4 1193.4,413.7 1196.9,413.8 1200.4,413.6 1204.0,413.6 1207.5,413.4 1211.0,413.6 1214.6,413.8 1218.1,413.4 1221.6,413.8 1225.2,413.4 1228.7,413.8 1232.2,413.7 1235.7,413.4 1239.3,413.8 1242.8,413.8 1246.3,413.6 1249.9,413.5 1253.4,413.5 1256.9,413.6 1260.5,413.6 1264.0,413.9 1267.5,413.7 1271.1,414.2 1274.6,414.2 1278.1,414.2 1281.7,414.9 1285.2,415.6 1288.7,416.6 1292.2,417.7 1295.8,418.4 1299.3,418.6 1302.8,418.6 1302.8,421.8 1299.3,421.8 1295.8,422.0 1292.2,422.7 1288.7,423.8 1285.2,424.8 1281.7,425.5 1278.1,426.2 1274.6,426.2 1271.1,426.2 1267.5,426.7 1264.0,426.5 1260.5,426.8 1256.9,426.8 1253.4,426.9 1249.9,426.9 1246.3,426.8 1242.8,426.6 1239.3,426.6 1235.7,427.0 1232.2,426.7 1228.7,426.6 1225.2,427.0 1221.6,426.6 1218.1,427.0 1214.6,426.6 1211.0,426.8 1207.5,427.0 1204.0,426.8 1200.4,426.8 1196.9,426.6 1193.4,426.7 1189.8,427.0 1186.3,427.0 1182.8,426.7 1179.2,427.0 1175.7,426.8 1172.2,427.1 1168.7,427.1 1165.1,427.0 1161.6,426.7 1158.1,426.9 1154.5,426.9 1151.0,427.0 1147.5,426.9 1143.9,426.7 1140.4,426.9 1136.9,426.8 1133.3,427.1 1129.8,427.0 1126.3,427.0 1122.7,426.9 1119.2,426.7 1115.7,427.0 1112.2,426.9 1108.6,426.8 1105.1,426.6 1101.6,426.9 1098.0,427.0 1094.5,426.6 1091.0,427.0 1087.4,427.0 1083.9,426.8 1080.4,427.0 1076.8,426.9 1073.3,426.8 1069.8,426.9 1066.2,426.7 1062.7,426.7 1059.2,426.6 1055.7,426.9 1052.1,426.8 1048.6,426.6 1045.1,426.6 1041.5,426.8 1038.0,426.7 1034.5,426.9 1030.9,427.1 1027.4,427.0 1023.9,426.9 1020.3,426.9 1016.8,426.8 1013.3,426.9 1009.7,426.6 1006.2,426.6 1002.7,426.7 999.2,427.0 995.6,426.6 992.1,426.8 988.6,426.6 985.0,426.6 981.5,427.0 978.0,426.7 974.4,426.9 970.9,426.9 967.4,426.6 963.8,427.0 960.3,426.6 956.8,426.6 953.2,426.8 949.7,427.1 946.2,427.0 942.6,426.7 939.1,426.8 935.6,426.9 932.1,426.8 928.5,426.7 925.0,426.7 921.5,426.8 917.9,426.6 914.4,426.7 910.9,427.1 907.3,426.9 903.8,427.0 900.3,427.0 896.7,426.8 893.2,426.6 889.7,426.7 886.1,426.9 882.6,426.8 879.1,427.0 875.6,427.0 872.0,427.0 868.5,426.8 865.0,426.7 861.4,426.9 857.9,426.7 854.4,427.0 850.8,426.8 847.3,426.9 843.8,427.0 840.2,426.6 836.7,426.7 833.2,426.9 829.6,426.7 826.1,426.6 822.6,426.7 819.1,427.0 815.5,426.9 812.0,426.8 808.5,426.9 804.9,426.7 801.4,426.8 797.9,426.9 794.3,426.6 790.8,426.9 787.3,426.6 783.7,427.0 780.2,426.8 776.7,426.9 773.1,426.9 769.6,426.8 766.1,426.9 762.6,427.0 759.0,427.1 755.5,426.9 752.0,426.6 748.4,426.9 744.9,426.9 741.4,426.8 737.8,426.9 734.3,426.9 730.8,427.0 727.2,427.0 723.7,426.8 720.2,427.0 716.6,427.0 713.1,426.9 709.6,426.7 706.1,427.0 702.5,427.0 699.0,426.9 695.5,427.0 691.9,427.0 688.4,427.0 684.9,426.9 681.3,426.6 677.8,427.1 674.3,426.8 670.7,427.0 667.2,426.9 663.7,426.9 660.1,426.6 656.6,427.1 653.1,427.0 649.6,427.1 646.0,426.6 642.5,426.7 639.0,426.7 635.4,427.0 631.9,427.0 628.4,427.0 624.8,427.2 621.3,427.1 617.8,426.9 614.2,426.7 610.7,427.0 607.2,426.9 603.6,426.8 600.1,426.7 596.6,426.9 593.1,426.8 589.5,426.7 586.0,426.8 582.5,427.2 578.9,426.9 575.4,427.1 571.9,427.2 568.3,427.1 564.8,426.9 561.3,426.9 557.7,427.3 554.2,427.0 550.7,427.1 547.1,427.3 543.6,427.5 540.1,427.2 536.5,427.5 533.0,427.2 529.5,427.7 526.0,427.2 522.4,427.2 518.9,427.5 515.4,427.6 511.8,427.8 508.3,427.9 504.8,427.4 501.2,427.9 497.7,427.8 494.2,427.5 490.6,427.6 487.1,428.0 483.6,428.1 480.0,427.6 476.5,427.7 473.0,428.1 469.5,428.0 465.9,428.0 462.4,428.3 458.9,428.0 455.3,428.0 451.8,428.2 448.3,428.0 444.7,428.2 441.2,427.9 437.7,427.9 434.1,428.1 430.6,428.1 427.1,428.4 423.5,428.1 420.0,428.1 416.5,428.6 413.0,428.0 409.4,428.4 405.9,428.6 402.4,428.3 398.8,428.2 395.3,429.1 391.8,428.9 388.2,429.3 384.7,429.5 381.2,429.0 377.6,429.0 374.1,429.2 370.6,429.0 367.0,429.4 363.5,429.1 360.0,429.6 356.5,429.2 352.9,429.4 349.4,429.6 345.9,429.3 342.3,429.8 338.8,429.3 335.3,429.4 331.7,429.6 328.2,429.6 324.7,430.1 321.1,430.4 317.6,429.9 314.1,429.8 310.5,430.0 307.0,430.5 303.5,430.5 300.0,430.1 296.4,430.4 292.9,431.0 289.4,430.7 285.8,431.1 282.3,430.6 278.8,430.5 275.2,431.3 271.7,431.5 268.2,431.1 264.6,431.7 261.1,431.4 257.6,431.8 254.0,431.3 250.5,431.6 247.0,431.7 243.5,431.9 239.9,432.4 236.4,432.6 232.9,432.9 229.3,433.0 225.8,432.4 222.3,432.7 218.7,433.0 215.2,433.1 211.7,433.5 208.1,433.6 204.6,434.2 201.1,433.9 197.5,434.2 194.0,433.9 190.5,434.4 187.0,434.4 183.4,434.3 179.9,435.0 176.4,434.4 172.8,434.7 169.3,435.3 165.8,435.4 162.2,435.9 158.7,436.2 155.2,435.5 151.6,436.8 148.1,437.5 144.6,437.0 141.0,437.7 137.5,437.9 134.0,439.0 130.5,438.8 126.9,438.7 123.4,438.3 119.9,438.9 116.3,438.9 112.8,438.9 109.3,439.6 105.7,439.1 102.2,439.0" fill="#bdbdbd"/><rect x="707.2" y="348.3" width="1.6" height="84.19999999999999" fill="#fff"/><rect x="315.3" y="421.2" width="4" height="12.300000000000011" fill="#fff"/><line x1="101.7" y1="420.2" x2="1299.5" y2="420.2" stroke="#555" stroke-width="1"/><line x1="848.5" y1="348.3" x2="848.5" y2="432.5" stroke="#444" stroke-width="1.1" stroke-dasharray="4,2.5"/><line x1="946" y1="348.3" x2="946" y2="432.5" stroke="#444" stroke-width="1.1" stroke-dasharray="4,2.5"/><line x1="1085" y1="348.3" x2="1085" y2="432.5" stroke="#444" stroke-width="1.1" stroke-dasharray="4,2.5"/><line x1="1107" y1="348.3" x2="1107" y2="432.5" stroke="#444" stroke-width="1.1" stroke-dasharray="4,2.5"/><rect x="122.5" y="348.3" width="12.199999999999989" height="84.19999999999999" fill="#9a9a9a" stroke="#222" stroke-width="1"/><line x1="122.5" y1="353.3" x2="134.7" y2="342.3" stroke="#222" stroke-width="0.9"/><line x1="122.5" y1="377.3" x2="134.7" y2="366.3" stroke="#222" stroke-width="0.9"/><line x1="122.5" y1="401.3" x2="134.7" y2="390.3" stroke="#222" stroke-width="0.9"/><line x1="122.5" y1="425.3" x2="134.7" y2="414.3" stroke="#222" stroke-width="0.9"/><line x1="122.5" y1="449.3" x2="134.7" y2="438.3" stroke="#222" stroke-width="0.9"/><rect x="1253" y="348.3" width="6.7000000000000455" height="84.19999999999999" fill="#9a9a9a" stroke="#222" stroke-width="1"/><line x1="1253" y1="353.3" x2="1259.7" y2="342.3" stroke="#222" stroke-width="0.9"/><line x1="1253" y1="377.3" x2="1259.7" y2="366.3" stroke="#222" stroke-width="0.9"/><line x1="1253" y1="401.3" x2="1259.7" y2="390.3" stroke="#222" stroke-width="0.9"/><line x1="1253" y1="425.3" x2="1259.7" y2="414.3" stroke="#222" stroke-width="0.9"/><line x1="1253" y1="449.3" x2="1259.7" y2="438.3" stroke="#222" stroke-width="0.9"/><polyline points="102.2,430.1 104.0,433.8 105.7,423.7 107.5,442.6 109.3,409.4 111.0,417.4 112.8,426.3 114.6,417.2 116.3,407.9 118.1,413.0 119.9,415.1 121.6,422.1 123.4,425.4 125.2,421.9 126.9,414.7 128.7,407.3 130.5,419.8 132.2,389.9 134.0,399.2 135.7,387.5 137.5,399.9 139.3,418.7 141.0,414.5 142.8,411.2 144.6,397.5 146.3,409.6 148.1,409.8 149.9,425.0 151.6,419.8 153.4,422.1 155.2,417.3 156.9,436.6 158.7,432.2 160.5,406.8 162.2,404.6 164.0,398.1 165.8,396.2 167.5,417.2 169.3,428.1 171.1,420.0 172.8,408.4 174.6,424.9 176.4,413.4 178.1,409.6 179.9,421.3 181.7,404.2 183.4,411.9 185.2,410.9 187.0,421.1 188.7,453.6 190.5,417.4 192.2,412.2 194.0,424.5 195.8,424.2 197.5,391.8 199.3,401.8 201.1,411.2 202.8,417.1 204.6,423.6 206.4,425.8 208.1,410.2 209.9,402.6 211.7,399.3 213.4,411.4 215.2,426.1 217.0,418.1 218.7,418.5 220.5,414.6 222.3,406.3 224.0,415.3 225.8,412.1 227.6,411.7 229.3,422.4 231.1,409.4 232.9,418.9 234.6,427.2 236.4,420.4 238.2,409.0 239.9,418.0 241.7,402.2 243.5,403.1 245.2,412.9 247.0,427.6 248.7,417.0 250.5,420.7 252.3,410.1 254.0,421.2 255.8,408.3 257.6,396.8 259.3,413.6 261.1,410.7 262.9,403.5 264.6,416.7 266.4,427.2 268.2,417.7 269.9,424.3 271.7,427.1 273.5,426.8 275.2,415.1 277.0,414.5 278.8,414.3 280.5,398.2 282.3,419.3 284.1,418.2 285.8,417.9 287.6,410.2 289.4,420.7 291.1,417.1 292.9,414.2 294.7,401.9 296.4,413.4 298.2,410.4 300.0,415.8 301.7,415.8 303.5,422.0 305.2,420.2 307.0,414.4 308.8,422.1 310.5,421.2 312.3,414.9 314.1,399.4 315.8,416.2 317.6,418.0 319.4,417.0 321.1,419.6 322.9,420.1 324.7,422.6 326.4,413.6 328.2,409.1 330.0,416.1 331.7,421.5 333.5,421.2 335.3,422.9 337.0,415.7 338.8,417.7 340.6,410.1 342.3,419.5 344.1,416.2 345.9,407.7 347.6,413.0 349.4,414.9 351.2,420.4 352.9,411.8 354.7,414.3 356.5,421.0 358.2,424.0 360.0,417.0 361.8,420.4 363.5,418.9 365.3,407.7 367.0,412.6 368.8,423.0 370.6,430.5 372.3,413.6 374.1,400.3 375.9,407.9 377.6,414.1 379.4,421.3 381.2,418.9 382.9,408.0 384.7,412.6 386.5,399.3 388.2,408.2 390.0,416.4 391.8,407.7 393.5,409.3 395.3,414.4 397.1,409.3 398.8,406.6 400.6,408.9 402.4,404.0 404.1,413.3 405.9,390.4 407.7,405.3 409.4,405.9 411.2,408.8 413.0,407.8 414.7,409.0 416.5,402.5 418.3,398.5 420.0,404.9 421.8,406.9 423.5,404.0 425.3,403.8 427.1,402.8 428.8,406.5 430.6,410.8 432.4,410.4 434.1,398.7 435.9,400.1 437.7,416.1 439.4,409.4 441.2,406.1 443.0,398.9 444.7,406.2 446.5,406.7 448.3,405.9 450.0,409.0 451.8,399.9 453.6,399.5 455.3,407.7 457.1,408.9 458.9,414.0 460.6,399.7 462.4,400.4 464.2,404.0 465.9,405.2 467.7,403.2 469.5,404.0 471.2,408.3 473.0,406.5 474.8,401.2 476.5,406.8 478.3,405.0 480.0,403.8 481.8,411.0 483.6,413.7 485.3,412.0 487.1,406.4 488.9,404.7 490.6,401.4 492.4,412.0 494.2,419.6 495.9,407.9 497.7,408.3 499.5,406.9 501.2,410.2 503.0,404.2 504.8,405.7 506.5,402.6 508.3,404.5 510.1,400.5 511.8,413.5 513.6,400.5 515.4,416.7 517.1,408.8 518.9,408.5 520.7,400.2 522.4,404.6 524.2,406.2 526.0,418.7 527.7,402.9 529.5,409.3 531.3,408.2 533.0,405.5 534.8,403.9 536.5,410.3 538.3,417.1 540.1,402.1 541.8,399.3 543.6,421.6 545.4,417.6 547.1,407.7 548.9,406.1 550.7,405.7 552.4,408.2 554.2,409.2 556.0,406.5 557.7,407.7 559.5,405.6 561.3,403.5 563.0,400.0 564.8,400.7 566.6,402.7 568.3,399.1 570.1,407.4 571.9,400.3 573.6,402.9 575.4,410.5 577.2,401.7 578.9,405.4 580.7,400.0 582.5,399.5 584.2,400.3 586.0,401.3 587.8,407.5 589.5,405.0 591.3,401.3 593.1,402.6 594.8,399.7 596.6,400.5 598.3,398.2 600.1,405.3 601.9,401.4 603.6,395.3 605.4,404.7 607.2,412.3 608.9,400.9 610.7,401.3 612.5,409.6 614.2,405.5 616.0,399.4 617.8,400.5 619.5,392.5 621.3,396.5 623.1,411.6 624.8,400.0 626.6,394.7 628.4,401.0 630.1,402.4 631.9,400.0 633.7,398.0 635.4,398.5 637.2,400.7 639.0,400.2 640.7,403.9 642.5,396.0 644.3,393.3 646.0,401.5 647.8,396.4 649.6,409.9 651.3,403.8 653.1,393.5 654.8,400.2 656.6,390.9 658.4,392.4 660.1,398.2 661.9,394.2 663.7,399.3 665.4,398.6 667.2,398.1 669.0,392.5 670.7,389.5 672.5,399.3 674.3,391.0 676.0,398.0 677.8,389.0 679.6,387.0 681.3,391.0 683.1,397.8 684.9,401.8 686.6,407.5 688.4,404.1 690.2,395.9 691.9,393.8 693.7,392.1 695.5,400.8 697.2,394.3 699.0,387.7 700.8,402.4 702.5,405.5 704.3,397.9 706.1,396.2 707.8,399.4 709.6,390.3 711.3,388.8 713.1,392.8 714.9,397.3 716.6,394.4 718.4,394.7 720.2,382.2 721.9,392.0 723.7,393.7 725.5,399.6 727.2,391.2 729.0,393.3 730.8,392.9 732.5,391.5 734.3,398.0 736.1,402.8 737.8,396.2 739.6,390.2 741.4,391.7 743.1,396.4 744.9,393.9 746.7,387.3 748.4,385.7 750.2,382.9 752.0,382.1 753.7,385.8 755.5,390.3 757.3,395.9 759.0,388.2 760.8,391.5 762.6,384.8 764.3,388.8 766.1,396.8 767.9,394.6 769.6,396.9 771.4,395.9 773.1,385.3 774.9,385.4 776.7,393.0 778.4,381.3 780.2,385.3 782.0,380.8 783.7,383.9 785.5,386.3 787.3,384.3 789.0,381.8 790.8,388.1 792.6,399.0 794.3,380.2 796.1,391.4 797.9,388.9 799.6,386.8 801.4,392.5 803.2,385.9 804.9,382.8 806.7,384.6 808.5,382.6 810.2,382.2 812.0,400.8 813.8,392.6 815.5,388.1 817.3,397.0 819.1,396.2 820.8,389.6 822.6,391.7 824.4,386.8 826.1,386.1 827.9,394.9 829.6,384.1 831.4,391.8 833.2,389.7 834.9,380.7 836.7,381.3 838.5,383.7 840.2,396.9 842.0,383.5 843.8,386.0 845.5,391.8 847.3,390.1 849.1,395.0 850.8,398.6 852.6,397.0 854.4,401.2 856.1,394.4 857.9,385.6 859.7,394.9 861.4,400.9 863.2,389.0 865.0,384.4 866.7,398.3 868.5,385.9 870.3,388.2 872.0,386.5 873.8,401.0 875.6,395.1 877.3,403.2 879.1,408.1 880.9,389.4 882.6,393.7 884.4,391.2 886.1,392.8 887.9,394.8 889.7,388.1 891.4,388.2 893.2,390.9 895.0,390.8 896.7,393.9 898.5,394.0 900.3,390.6 902.0,391.2 903.8,391.9 905.6,382.0 907.3,383.8 909.1,383.6 910.9,385.9 912.6,387.4 914.4,392.9 916.2,385.8 917.9,386.9 919.7,381.4 921.5,386.3 923.2,390.8 925.0,379.4 926.8,384.0 928.5,399.7 930.3,396.4 932.1,382.7 933.8,381.6 935.6,385.9 937.4,379.5 939.1,386.7 940.9,380.2 942.6,366.6 944.4,382.8 946.2,381.7 947.9,381.9 949.7,386.6 951.5,383.3 953.2,390.1 955.0,386.1 956.8,394.3 958.5,398.1 960.3,391.9 962.1,390.4 963.8,386.8 965.6,390.4 967.4,391.2 969.1,394.6 970.9,397.2 972.7,387.0 974.4,384.3 976.2,392.4 978.0,389.6 979.7,387.6 981.5,387.1 983.3,388.3 985.0,387.6 986.8,389.3 988.6,390.0 990.3,395.7 992.1,387.7 993.9,387.8 995.6,386.2 997.4,385.8 999.2,380.3 1000.9,390.2 1002.7,387.0 1004.4,388.4 1006.2,387.2 1008.0,386.0 1009.7,381.1 1011.5,387.8 1013.3,387.8 1015.0,373.0 1016.8,382.5 1018.6,383.7 1020.3,386.2 1022.1,387.8 1023.9,387.4 1025.6,390.1 1027.4,383.0 1029.2,379.6 1030.9,376.9 1032.7,385.5 1034.5,382.1 1036.2,391.9 1038.0,385.9 1039.8,377.4 1041.5,385.7 1043.3,389.0 1045.1,382.8 1046.8,386.1 1048.6,375.8 1050.4,384.8 1052.1,388.5 1053.9,377.7 1055.7,383.2 1057.4,379.3 1059.2,380.8 1060.9,386.0 1062.7,382.9 1064.5,377.2 1066.2,373.9 1068.0,382.0 1069.8,380.6 1071.5,378.1 1073.3,373.9 1075.1,373.6 1076.8,380.2 1078.6,379.1 1080.4,380.7 1082.1,379.8 1083.9,394.8 1085.7,396.4 1087.4,393.7 1089.2,384.4 1091.0,387.8 1092.7,379.0 1094.5,377.9 1096.3,391.5 1098.0,378.9 1099.8,381.1 1101.6,386.4 1103.3,387.5 1105.1,393.2 1106.9,395.4 1108.6,386.7 1110.4,377.1 1112.2,364.5 1113.9,363.8 1115.7,370.5 1117.4,373.7 1119.2,372.5 1121.0,368.8 1122.7,374.5 1124.5,371.1 1126.3,367.4 1128.0,366.9 1129.8,376.9 1131.6,380.6 1133.3,376.9 1135.1,369.8 1136.9,399.6 1138.6,379.1 1140.4,378.8 1142.2,389.2 1143.9,373.9 1145.7,374.0 1147.5,382.8 1149.2,371.1 1151.0,372.1 1152.8,379.0 1154.5,373.3 1156.3,377.1 1158.1,371.0 1159.8,386.5 1161.6,381.9 1163.4,374.1 1165.1,360.9 1166.9,369.1 1168.7,374.0 1170.4,375.5 1172.2,371.6 1173.9,369.3 1175.7,369.9 1177.5,376.0 1179.2,372.0 1181.0,374.6 1182.8,378.4 1184.5,368.7 1186.3,365.2 1188.1,372.4 1189.8,369.8 1191.6,370.9 1193.4,367.1 1195.1,377.6 1196.9,368.4 1198.7,375.4 1200.4,376.4 1202.2,374.6 1204.0,357.7 1205.7,361.8 1207.5,361.6 1209.3,362.9 1211.0,359.7 1212.8,362.0 1214.6,367.5 1216.3,358.0 1218.1,351.8 1219.9,364.7 1221.6,370.3 1223.4,359.7 1225.2,370.7 1226.9,363.8 1228.7,366.1 1230.5,372.2 1232.2,363.6 1234.0,367.1 1235.7,357.3 1237.5,365.2 1239.3,364.9 1241.0,357.9 1242.8,357.1 1244.6,355.1 1246.3,358.8 1248.1,365.5 1249.9,375.0 1251.6,380.3 1253.4,384.9 1255.2,387.8 1256.9,384.5 1258.7,389.0 1260.5,385.0 1262.2,382.4 1264.0,381.4 1265.8,386.5 1267.5,374.8 1269.3,380.8 1271.1,385.5 1272.8,378.3 1274.6,381.2 1276.4,370.7 1278.1,374.8 1279.9,371.0 1281.7,377.3 1283.4,384.4 1285.2,379.6 1287.0,382.8 1288.7,381.9 1290.5,379.1 1292.2,379.1 1294.0,379.3 1295.8,380.9 1297.5,377.4 1299.3,369.9" fill="none" stroke="#0000ff" stroke-width="1.25" stroke-linejoin="miter"/></g><rect x="101.7" y="348.3" width="1197.8" height="84.19999999999999" fill="none" stroke="#333" stroke-width="1"/><line x1="97.7" y1="420.2" x2="101.7" y2="420.2" stroke="#333" stroke-width="0.8"/><text x="94.7" y="424.0" font-family="Liberation Sans, sans-serif" font-size="10.5" fill="#000" text-anchor="end" >0</text><line x1="97.7" y1="388.7" x2="101.7" y2="388.7" stroke="#333" stroke-width="0.8"/><text x="94.7" y="392.5" font-family="Liberation Sans, sans-serif" font-size="10.5" fill="#000" text-anchor="end" >5</text><line x1="97.7" y1="357.2" x2="101.7" y2="357.2" stroke="#333" stroke-width="0.8"/><text x="94.7" y="361.0" font-family="Liberation Sans, sans-serif" font-size="10.5" fill="#000" text-anchor="end" >10</text><line x1="102.2" y1="432.5" x2="102.2" y2="436.5" stroke="#333" stroke-width="0.8"/><text x="102.2" y="446.7" font-family="Liberation Sans, sans-serif" font-size="10.5" fill="#000" text-anchor="middle" >3500</text><line x1="161.1" y1="432.5" x2="161.1" y2="436.5" stroke="#333" stroke-width="0.8"/><text x="161.055" y="446.7" font-family="Liberation Sans, sans-serif" font-size="10.5" fill="#000" text-anchor="middle" >3600</text><line x1="219.9" y1="432.5" x2="219.9" y2="436.5" stroke="#333" stroke-width="0.8"/><text x="219.91000000000003" y="446.7" font-family="Liberation Sans, sans-serif" font-size="10.5" fill="#000" text-anchor="middle" >3700</text><line x1="278.8" y1="432.5" x2="278.8" y2="436.5" stroke="#333" stroke-width="0.8"/><text x="278.765" y="446.7" font-family="Liberation Sans, sans-serif" font-size="10.5" fill="#000" text-anchor="middle" >3800</text><line x1="337.6" y1="432.5" x2="337.6" y2="436.5" stroke="#333" stroke-width="0.8"/><text x="337.62" y="446.7" font-family="Liberation Sans, sans-serif" font-size="10.5" fill="#000" text-anchor="middle" >3900</text><line x1="396.5" y1="432.5" x2="396.5" y2="436.5" stroke="#333" stroke-width="0.8"/><text x="396.475" y="446.7" font-family="Liberation Sans, sans-serif" font-size="10.5" fill="#000" text-anchor="middle" >4000</text><line x1="455.3" y1="432.5" x2="455.3" y2="436.5" stroke="#333" stroke-width="0.8"/><text x="455.33" y="446.7" font-family="Liberation Sans, sans-serif" font-size="10.5" fill="#000" text-anchor="middle" >4100</text><line x1="514.2" y1="432.5" x2="514.2" y2="436.5" stroke="#333" stroke-width="0.8"/><text x="514.1850000000001" y="446.7" font-family="Liberation Sans, sans-serif" font-size="10.5" fill="#000" text-anchor="middle" >4200</text><line x1="573.0" y1="432.5" x2="573.0" y2="436.5" stroke="#333" stroke-width="0.8"/><text x="573.0400000000001" y="446.7" font-family="Liberation Sans, sans-serif" font-size="10.5" fill="#000" text-anchor="middle" >4300</text><line x1="631.9" y1="432.5" x2="631.9" y2="436.5" stroke="#333" stroke-width="0.8"/><text x="631.8950000000001" y="446.7" font-family="Liberation Sans, sans-serif" font-size="10.5" fill="#000" text-anchor="middle" >4400</text><line x1="690.8" y1="432.5" x2="690.8" y2="436.5" stroke="#333" stroke-width="0.8"/><text x="690.7500000000001" y="446.7" font-family="Liberation Sans, sans-serif" font-size="10.5" fill="#000" text-anchor="middle" >4500</text><line x1="749.6" y1="432.5" x2="749.6" y2="436.5" stroke="#333" stroke-width="0.8"/><text x="749.605" y="446.7" font-family="Liberation Sans, sans-serif" font-size="10.5" fill="#000" text-anchor="middle" >4600</text><line x1="808.5" y1="432.5" x2="808.5" y2="436.5" stroke="#333" stroke-width="0.8"/><text x="808.46" y="446.7" font-family="Liberation Sans, sans-serif" font-size="10.5" fill="#000" text-anchor="middle" >4700</text><line x1="867.3" y1="432.5" x2="867.3" y2="436.5" stroke="#333" stroke-width="0.8"/><text x="867.315" y="446.7" font-family="Liberation Sans, sans-serif" font-size="10.5" fill="#000" text-anchor="middle" >4800</text><line x1="926.2" y1="432.5" x2="926.2" y2="436.5" stroke="#333" stroke-width="0.8"/><text x="926.1700000000001" y="446.7" font-family="Liberation Sans, sans-serif" font-size="10.5" fill="#000" text-anchor="middle" >4900</text><line x1="985.0" y1="432.5" x2="985.0" y2="436.5" stroke="#333" stroke-width="0.8"/><text x="985.0250000000001" y="446.7" font-family="Liberation Sans, sans-serif" font-size="10.5" fill="#000" text-anchor="middle" >5000</text><line x1="1043.9" y1="432.5" x2="1043.9" y2="436.5" stroke="#333" stroke-width="0.8"/><text x="1043.88" y="446.7" font-family="Liberation Sans, sans-serif" font-size="10.5" fill="#000" text-anchor="middle" >5100</text><line x1="1102.7" y1="432.5" x2="1102.7" y2="436.5" stroke="#333" stroke-width="0.8"/><text x="1102.7350000000001" y="446.7" font-family="Liberation Sans, sans-serif" font-size="10.5" fill="#000" text-anchor="middle" >5200</text><line x1="1161.6" y1="432.5" x2="1161.6" y2="436.5" stroke="#333" stroke-width="0.8"/><text x="1161.5900000000001" y="446.7" font-family="Liberation Sans, sans-serif" font-size="10.5" fill="#000" text-anchor="middle" >5300</text><line x1="1220.4" y1="432.5" x2="1220.4" y2="436.5" stroke="#333" stroke-width="0.8"/><text x="1220.4450000000002" y="446.7" font-family="Liberation Sans, sans-serif" font-size="10.5" fill="#000" text-anchor="middle" >5400</text><line x1="1279.3" y1="432.5" x2="1279.3" y2="436.5" stroke="#333" stroke-width="0.8"/><text x="1279.3000000000002" y="446.7" font-family="Liberation Sans, sans-serif" font-size="10.5" fill="#000" text-anchor="middle" >5500</text><text x="103" y="346" font-family="Liberation Sans, sans-serif" font-size="10.5" fill="#000" text-anchor="start" >e</text><text x="108.5" y="339.5" font-family="Liberation Sans, sans-serif" font-size="6.5" fill="#000" text-anchor="start" >−17</text><text x="122" y="346" font-family="Liberation Sans, sans-serif" font-size="10.5" fill="#000" text-anchor="start" >x2Å</text><text transform="translate(107.3,345) rotate(90)" font-family="Liberation Sans, sans-serif" font-size="10.5" fill="#a8d8f0" opacity="0.7" text-anchor="end">MgII</text><text transform="translate(107.3,348) rotate(90)" font-family="Liberation Sans, sans-serif" font-size="10" fill="#a8d8f0" opacity="0.7" text-anchor="end">{</text><text transform="translate(165.8,338) rotate(90)" font-family="Liberation Sans, sans-serif" font-size="10.5" fill="#8b1a8b" opacity="1" text-anchor="end">SiIV</text><text transform="translate(165.8,348) rotate(90)" font-family="Liberation Sans, sans-serif" font-size="10" fill="#8b1a8b" opacity="1" text-anchor="end">{</text><text transform="translate(190.8,340) rotate(90)" font-family="Liberation Sans, sans-serif" font-size="10.5" fill="#ffa500" opacity="1" text-anchor="end">Lyα</text><text transform="translate(190.8,348) rotate(90)" font-family="Liberation Sans, sans-serif" font-size="10" fill="#ffa500" opacity="1" text-anchor="end">{</text><text transform="translate(219.8,338) rotate(90)" font-family="Liberation Sans, sans-serif" font-size="10.5" fill="#008000" opacity="1" text-anchor="end">MgII</text><text transform="translate(219.8,348) rotate(90)" font-family="Liberation Sans, sans-serif" font-size="10" fill="#008000" opacity="1" text-anchor="end">{</text><text transform="translate(236.8,333) rotate(90)" font-family="Liberation Sans, sans-serif" font-size="10.5" fill="#ffa500" opacity="1" text-anchor="end">NV</text><text transform="translate(236.8,348) rotate(90)" font-family="Liberation Sans, sans-serif" font-size="10" fill="#ffa500" opacity="1" text-anchor="end">{</text><text transform="translate(266.8,336) rotate(90)" font-family="Liberation Sans, sans-serif" font-size="10.5" fill="#0000ff" opacity="1" text-anchor="end">OII</text><text transform="translate(266.8,348) rotate(90)" font-family="Liberation Sans, sans-serif" font-size="10" fill="#0000ff" opacity="1" text-anchor="end">{</text><text transform="translate(276.8,338) rotate(90)" font-family="Liberation Sans, sans-serif" font-size="10.5" fill="#ffa500" opacity="1" text-anchor="end">SiII</text><text transform="translate(276.8,348) rotate(90)" font-family="Liberation Sans, sans-serif" font-size="10" fill="#ffa500" opacity="1" text-anchor="end">{</text><text transform="translate(317.8,340) rotate(90)" font-family="Liberation Sans, sans-serif" font-size="10.5" fill="#9a5ce0" opacity="1" text-anchor="end">Lyα</text><text transform="translate(317.8,348) rotate(90)" font-family="Liberation Sans, sans-serif" font-size="10" fill="#9a5ce0" opacity="1" text-anchor="end">{</text><text transform="translate(365.8,333) rotate(90)" font-family="Liberation Sans, sans-serif" font-size="10.5" fill="#8a2be2" opacity="1" text-anchor="end">NV</text><text transform="translate(365.8,348) rotate(90)" font-family="Liberation Sans, sans-serif" font-size="10" fill="#8a2be2" opacity="1" text-anchor="end">{</text><text transform="translate(396.3,336) rotate(90)" font-family="Liberation Sans, sans-serif" font-size="10.5" fill="#800080" opacity="1" text-anchor="end">CIV</text><text transform="translate(396.3,348) rotate(90)" font-family="Liberation Sans, sans-serif" font-size="10" fill="#800080" opacity="1" text-anchor="end">{</text><text transform="translate(407.8,338) rotate(90)" font-family="Liberation Sans, sans-serif" font-size="10.5" fill="#a040e0" opacity="1" text-anchor="end">SiII</text><text transform="translate(407.8,348) rotate(90)" font-family="Liberation Sans, sans-serif" font-size="10" fill="#a040e0" opacity="1" text-anchor="end">{</text><text transform="translate(451.8,336) rotate(90)" font-family="Liberation Sans, sans-serif" font-size="10.5" fill="#ff00ff" opacity="1" text-anchor="end">CII</text><text transform="translate(451.8,348) rotate(90)" font-family="Liberation Sans, sans-serif" font-size="10" fill="#ff00ff" opacity="1" text-anchor="end">{</text><text transform="translate(512.6,336) rotate(90)" font-family="Liberation Sans, sans-serif" font-size="10.5" fill="#ff0000" opacity="1" text-anchor="end">OVI</text><text transform="translate(512.6,348) rotate(90)" font-family="Liberation Sans, sans-serif" font-size="10" fill="#ff0000" opacity="1" text-anchor="end">{</text><text transform="translate(536.5,339) rotate(90)" font-family="Liberation Sans, sans-serif" font-size="10.5" fill="#800080" opacity="1" text-anchor="end">HeII</text><text transform="translate(536.5,348) rotate(90)" font-family="Liberation Sans, sans-serif" font-size="10" fill="#800080" opacity="1" text-anchor="end">{</text><text transform="translate(632.8,340) rotate(90)" font-family="Liberation Sans, sans-serif" font-size="10.5" fill="#0000cd" opacity="1" text-anchor="end">Hγ</text><text transform="translate(632.8,348) rotate(90)" font-family="Liberation Sans, sans-serif" font-size="10" fill="#0000cd" opacity="1" text-anchor="end">{</text><text transform="translate(659.8,340) rotate(90)" font-family="Liberation Sans, sans-serif" font-size="10.5" fill="#9a5ce0" opacity="1" text-anchor="end">SiIV</text><text transform="translate(659.8,348) rotate(90)" font-family="Liberation Sans, sans-serif" font-size="10" fill="#9a5ce0" opacity="1" text-anchor="end">{</text><text transform="translate(768.5,340) rotate(90)" font-family="Liberation Sans, sans-serif" font-size="10.5" fill="#87ceeb" opacity="0.8" text-anchor="end">OII</text><text transform="translate(768.5,348) rotate(90)" font-family="Liberation Sans, sans-serif" font-size="10" fill="#87ceeb" opacity="0.8" text-anchor="end">{</text><text transform="translate(782.8,340) rotate(90)" font-family="Liberation Sans, sans-serif" font-size="10.5" fill="#ffa500" opacity="1" text-anchor="end">CIV</text><text transform="translate(782.8,348) rotate(90)" font-family="Liberation Sans, sans-serif" font-size="10" fill="#ffa500" opacity="1" text-anchor="end">{</text><text transform="translate(791.8,340) rotate(90)" font-family="Liberation Sans, sans-serif" font-size="10.5" fill="#87ceeb" opacity="0.8" text-anchor="end">OII</text><text transform="translate(791.8,348) rotate(90)" font-family="Liberation Sans, sans-serif" font-size="10" fill="#87ceeb" opacity="0.8" text-anchor="end">{</text><text transform="translate(1003.3,337) rotate(90)" font-family="Liberation Sans, sans-serif" font-size="10.5" fill="#ff0000" opacity="1" text-anchor="end">NV</text><text transform="translate(1003.3,348) rotate(90)" font-family="Liberation Sans, sans-serif" font-size="10" fill="#ff0000" opacity="1" text-anchor="end">{</text><text transform="translate(1030.8,339) rotate(90)" font-family="Liberation Sans, sans-serif" font-size="10.5" fill="#0000ff" opacity="1" text-anchor="end">OIII</text><text transform="translate(1030.8,348) rotate(90)" font-family="Liberation Sans, sans-serif" font-size="10" fill="#0000ff" opacity="1" text-anchor="end">{</text><text transform="translate(1058.5,339) rotate(90)" font-family="Liberation Sans, sans-serif" font-size="10.5" fill="#ff0000" opacity="1" text-anchor="end">SiII</text><text transform="translate(1058.5,348) rotate(90)" font-family="Liberation Sans, sans-serif" font-size="10" fill="#ff0000" opacity="1" text-anchor="end">{</text><text transform="translate(1103.3,339) rotate(90)" font-family="Liberation Sans, sans-serif" font-size="10.5" fill="#008000" opacity="1" text-anchor="end">(K)CaII</text><text transform="translate(1103.3,348) rotate(90)" font-family="Liberation Sans, sans-serif" font-size="10" fill="#008000" opacity="1" text-anchor="end">{</text><text transform="translate(1114.8,339) rotate(90)" font-family="Liberation Sans, sans-serif" font-size="10.5" fill="#8a2be2" opacity="1" text-anchor="end">HeII</text><text transform="translate(1114.8,348) rotate(90)" font-family="Liberation Sans, sans-serif" font-size="10" fill="#8a2be2" opacity="1" text-anchor="end">{</text><text transform="translate(1216.4,340) rotate(90)" font-family="Liberation Sans, sans-serif" font-size="10.5" fill="#87ceeb" opacity="0.8" text-anchor="end">Hγ</text><text transform="translate(1216.4,348) rotate(90)" font-family="Liberation Sans, sans-serif" font-size="10" fill="#87ceeb" opacity="0.8" text-anchor="end">{</text><text transform="translate(1244.8,340) rotate(90)" font-family="Liberation Sans, sans-serif" font-size="10.5" fill="#87ceeb" opacity="0.8" text-anchor="end">Hγ</text><text transform="translate(1244.8,348) rotate(90)" font-family="Liberation Sans, sans-serif" font-size="10" fill="#87ceeb" opacity="0.8" text-anchor="end">{</text><text transform="translate(1292.8,340) rotate(90)" font-family="Liberation Sans, sans-serif" font-size="10.5" fill="#4169e1" opacity="1" text-anchor="end">Hβ</text><text transform="translate(1292.8,348) rotate(90)" font-family="Liberation Sans, sans-serif" font-size="10" fill="#4169e1" opacity="1" text-anchor="end">{</text><text transform="translate(514.7,297) rotate(90)" font-family="Liberation Sans, sans-serif" font-size="10.5" fill="#ffa500" text-anchor="end">SiIV</text><text transform="translate(514.7,306) rotate(90)" font-family="Liberation Sans, sans-serif" font-size="10" fill="#ffa500" text-anchor="end">{</text><text transform="translate(534.8,294) rotate(90)" font-family="Liberation Sans, sans-serif" font-size="10.5" fill="#4169e1" text-anchor="end">OII</text><text transform="translate(534.8,306) rotate(90)" font-family="Liberation Sans, sans-serif" font-size="10" fill="#4169e1" text-anchor="end">{</text><text transform="translate(1001.8,300) rotate(90)" font-family="Liberation Sans, sans-serif" font-size="10.5" fill="#0000ff" text-anchor="end">OIII</text><text transform="translate(1001.8,306) rotate(90)" font-family="Liberation Sans, sans-serif" font-size="10" fill="#0000ff" text-anchor="end">{</text><rect x="429" y="449.5" width="18.5" height="7" fill="#ff0000"/><text x="454" y="457" font-family="Liberation Sans, sans-serif" font-size="9.2" fill="#333" text-anchor="start" >Lyα</text><rect x="483" y="449.5" width="18.5" height="7" fill="#008000"/><text x="508" y="457" font-family="Liberation Sans, sans-serif" font-size="9.2" fill="#333" text-anchor="start" >OII</text><rect x="536" y="449.5" width="18.5" height="7" fill="#8a2be2"/><text x="561" y="457" font-family="Liberation Sans, sans-serif" font-size="9.2" fill="#333" text-anchor="start" >CIV</text><rect x="590" y="449.5" width="18.5" height="7" fill="#800080"/><text x="615" y="457" font-family="Liberation Sans, sans-serif" font-size="9.2" fill="#333" text-anchor="start" >CIII</text><rect x="643" y="449.5" width="18.5" height="7" fill="#ff00ff"/><text x="668" y="457" font-family="Liberation Sans, sans-serif" font-size="9.2" fill="#333" text-anchor="start" >MgII</text><rect x="697" y="449.5" width="18.5" height="7" fill="#0000ff"/><text x="722" y="457" font-family="Liberation Sans, sans-serif" font-size="9.2" fill="#333" text-anchor="start" >Hβ</text><rect x="748.6" y="449.5" width="18.5" height="7" fill="#4169e1"/><text x="773.6" y="457" font-family="Liberation Sans, sans-serif" font-size="9.2" fill="#333" text-anchor="start" >Hγ</text><rect x="799" y="449.5" width="18.5" height="7" fill="#ffa500"/><text x="824" y="457" font-family="Liberation Sans, sans-serif" font-size="9.2" fill="#333" text-anchor="start" >HeII</text><rect x="854" y="449.5" width="18.5" height="7" fill="#87ceeb"/><text x="879" y="457" font-family="Liberation Sans, sans-serif" font-size="9.2" fill="#333" text-anchor="start" >(K)CaII</text><rect x="920.6" y="449.5" width="18.5" height="7" fill="#87ceeb"/><text x="945.6" y="457" font-family="Liberation Sans, sans-serif" font-size="9.2" fill="#333" text-anchor="start" >(H)CaII</text><defs>
<filter id="nzg" x="0" y="0" width="1" height="1" color-interpolation-filters="sRGB">
 <feTurbulence type="fractalNoise" baseFrequency="0.35" numOctaves="1" seed="12"/>
 <feColorMatrix type="matrix" values="1 0 0 0 0 1 0 0 0 0 1 0 0 0 0 0 0 0 0 1"/>
 <feComponentTransfer><feFuncR type="linear" slope="0.5" intercept="0.6"/><feFuncG type="linear" slope="0.5" intercept="0.6"/><feFuncB type="linear" slope="0.5" intercept="0.6"/></feComponentTransfer>
</filter>
<filter id="nzg2" x="0" y="0" width="1" height="1" color-interpolation-filters="sRGB">
 <feTurbulence type="fractalNoise" baseFrequency="0.35" numOctaves="1" seed="21"/>
 <feColorMatrix type="matrix" values="1 0 0 0 0 1 0 0 0 0 1 0 0 0 0 0 0 0 0 1"/>
 <feComponentTransfer><feFuncR type="linear" slope="0.5" intercept="0.6"/><feFuncG type="linear" slope="0.5" intercept="0.6"/><feFuncB type="linear" slope="0.5" intercept="0.6"/></feComponentTransfer>
</filter>
<radialGradient id="blob"><stop offset="0" stop-color="#000"/><stop offset="0.62" stop-color="#000"/><stop offset="0.82" stop-color="#000" stop-opacity="0.45"/><stop offset="1" stop-color="#000" stop-opacity="0"/></radialGradient>
<radialGradient id="blob2"><stop offset="0" stop-color="#000"/><stop offset="0.66" stop-color="#000"/><stop offset="0.82" stop-color="#000" stop-opacity="0.45"/><stop offset="1" stop-color="#000" stop-opacity="0"/></radialGradient>
</defs><text transform="translate(70,498.3) scale(1,1.09)" font-family="Liberation Mono, monospace" font-size="13" fill="#000" stroke="#000" stroke-width="0.12" >HSC-DEX : Possible Matches = 1 (within +/- 3")  P(LAE)/P(OII):</text><text x="561" y="498.3" font-family="Liberation Sans, sans-serif" font-size="14" fill="#000" text-anchor="start" >0.001</text><text x="602" y="492.1" font-family="Liberation Sans, sans-serif" font-size="9.5" fill="#000" text-anchor="start" textLength="25.8" lengthAdjust="spacingAndGlyphs">0.003</text><text x="602" y="501.4" font-family="Liberation Sans, sans-serif" font-size="9.5" fill="#000" text-anchor="start" textLength="25.8" lengthAdjust="spacingAndGlyphs">0.001</text><text transform="translate(636.6,498.3) scale(1,1.09)" font-family="Liberation Mono, monospace" font-size="13" fill="#000" stroke="#000" stroke-width="0.12" >(r)</text><clipPath id="p1"><rect x="70.2" y="532.5" width="147.8" height="147.6"/></clipPath><g clip-path="url(#p1)"><rect x="70.2" y="532.5" width="147.8" height="147.6" filter="url(#nzg)"/><circle cx="141.5" cy="610.5" r="26" fill="url(#blob)"/><ellipse cx="169.7" cy="675.2" rx="9" ry="11" fill="#000" opacity="0.12"/><circle cx="114.8" cy="569.9" r="11.6" fill="none" stroke="#666" stroke-width="0.9"/><circle cx="139.1" cy="569.9" r="11.6" fill="none" stroke="#666" stroke-width="0.9"/><circle cx="162.9" cy="569.9" r="11.6" fill="none" stroke="#666" stroke-width="0.9"/><circle cx="102.7" cy="590.7" r="11.6" fill="none" stroke="#666" stroke-width="0.9"/><circle cx="126.9" cy="590.7" r="11.6" fill="none" stroke="#666" stroke-width="0.9"/><circle cx="151.2" cy="590.7" r="11.6" fill="none" stroke="#666" stroke-width="0.9"/><circle cx="175.5" cy="590.7" r="11.6" fill="none" stroke="#666" stroke-width="0.9"/><circle cx="198.6" cy="590.7" r="11.6" fill="none" stroke="#666" stroke-width="0.9"/><circle cx="90.5" cy="612.0" r="11.6" fill="none" stroke="#666" stroke-width="0.9"/><circle cx="114.8" cy="612.0" r="11.6" fill="none" stroke="#666" stroke-width="0.9"/><circle cx="139.1" cy="612.0" r="11.6" fill="none" stroke="#666" stroke-width="0.9"/><circle cx="163.3" cy="612.0" r="11.6" fill="none" stroke="#666" stroke-width="0.9"/><circle cx="187.6" cy="612.0" r="11.6" fill="none" stroke="#666" stroke-width="0.9"/><circle cx="102.7" cy="632.5" r="11.6" fill="none" stroke="#666" stroke-width="0.9"/><circle cx="126.9" cy="632.5" r="11.6" fill="none" stroke="#666" stroke-width="0.9"/><circle cx="151.2" cy="632.5" r="11.6" fill="none" stroke="#666" stroke-width="0.9"/><circle cx="175.5" cy="632.5" r="11.6" fill="none" stroke="#666" stroke-width="0.9"/><circle cx="115.9" cy="653.0" r="11.6" fill="none" stroke="#666" stroke-width="0.9"/><circle cx="140.2" cy="653.0" r="11.6" fill="none" stroke="#666" stroke-width="0.9"/><circle cx="163.3" cy="653.0" r="11.6" fill="none" stroke="#666" stroke-width="0.9"/><circle cx="126.9" cy="590.7" r="11.6" fill="none" stroke="#ff0000" stroke-width="1.3"/><circle cx="151.2" cy="590.7" r="11.6" fill="none" stroke="#00ee00" stroke-width="1.3"/><circle cx="139.1" cy="612.0" r="11.6" fill="none" stroke="#0000ff" stroke-width="1.3"/><circle cx="163.3" cy="612.0" r="11.6" fill="none" stroke="#ffa500" stroke-width="1.3"/><path d="M139.5 606.3H147.5M143.5 602.3V610.3" stroke="#ff0000" stroke-width="1.2"/><rect x="94.3" y="557.1" width="98.4" height="98.4" fill="none" stroke="#ff0000" stroke-width="1.1"/><text x="143.5" y="546.8399999999999" font-family="Liberation Sans, sans-serif" font-size="12" fill="#ff0000" text-anchor="middle" >N</text><text x="78.72" y="610.8" font-family="Liberation Sans, sans-serif" font-size="12" fill="#ff0000" text-anchor="middle" >E</text></g><rect x="70.2" y="532.5" width="147.8" height="147.6" fill="none" stroke="#222" stroke-width="1"/><line x1="66.2" y1="671.9" x2="70.2" y2="671.9" stroke="#222" stroke-width="0.8"/><text x="65.2" y="675.9" font-family="Liberation Sans, sans-serif" font-size="11.5" fill="#000" text-anchor="end" >−4</text><line x1="77.9" y1="680.1" x2="77.9" y2="684.1" stroke="#222" stroke-width="0.8"/><text x="77.9" y="697" font-family="Liberation Sans, sans-serif" font-size="11.5" fill="#000" text-anchor="middle" >−4</text><line x1="66.2" y1="639.1" x2="70.2" y2="639.1" stroke="#222" stroke-width="0.8"/><text x="65.2" y="643.0999999999999" font-family="Liberation Sans, sans-serif" font-size="11.5" fill="#000" text-anchor="end" >−2</text><line x1="110.7" y1="680.1" x2="110.7" y2="684.1" stroke="#222" stroke-width="0.8"/><text x="110.7" y="697" font-family="Liberation Sans, sans-serif" font-size="11.5" fill="#000" text-anchor="middle" >−2</text><line x1="66.2" y1="606.3" x2="70.2" y2="606.3" stroke="#222" stroke-width="0.8"/><text x="65.2" y="610.3" font-family="Liberation Sans, sans-serif" font-size="11.5" fill="#000" text-anchor="end" >0</text><line x1="143.5" y1="680.1" x2="143.5" y2="684.1" stroke="#222" stroke-width="0.8"/><text x="143.5" y="697" font-family="Liberation Sans, sans-serif" font-size="11.5" fill="#000" text-anchor="middle" >0</text><line x1="66.2" y1="573.5" x2="70.2" y2="573.5" stroke="#222" stroke-width="0.8"/><text x="65.2" y="577.5" font-family="Liberation Sans, sans-serif" font-size="11.5" fill="#000" text-anchor="end" >2</text><line x1="176.3" y1="680.1" x2="176.3" y2="684.1" stroke="#222" stroke-width="0.8"/><text x="176.3" y="697" font-family="Liberation Sans, sans-serif" font-size="11.5" fill="#000" text-anchor="middle" >2</text><line x1="66.2" y1="540.7" x2="70.2" y2="540.7" stroke="#222" stroke-width="0.8"/><text x="65.2" y="544.6999999999999" font-family="Liberation Sans, sans-serif" font-size="11.5" fill="#000" text-anchor="end" >4</text><line x1="209.1" y1="680.1" x2="209.1" y2="684.1" stroke="#222" stroke-width="0.8"/><text x="209.1" y="697" font-family="Liberation Sans, sans-serif" font-size="11.5" fill="#000" text-anchor="middle" >4</text><text x="144.10000000000002" y="525.8" font-family="Liberation Sans, sans-serif" font-size="13.8" fill="#000" text-anchor="middle" >Fiber Positions</text><text x="144.10000000000002" y="706.5" font-family="Liberation Sans, sans-serif" font-size="11.5" fill="#000" text-anchor="middle" >arcsecs</text><g shape-rendering="crispEdges"><rect x="255.30" y="533.00" width="24.41" height="4.29" fill="#31668d"/><rect x="279.41" y="533.00" width="36.47" height="4.29" fill="#287b8d"/><rect x="315.58" y="533.00" width="16.38" height="4.29" fill="#31668d"/><rect x="331.66" y="533.00" width="12.36" height="4.29" fill="#287b8d"/><rect x="343.72" y="533.00" width="8.34" height="4.29" fill="#31668d"/><rect x="351.75" y="533.00" width="4.32" height="4.29" fill="#3b518b"/><rect x="355.77" y="533.00" width="8.34" height="4.29" fill="#461d6d"/><rect x="363.81" y="533.00" width="40.49" height="4.29" fill="#440154"/><rect x="255.30" y="536.99" width="24.41" height="4.29" fill="#31668d"/><rect x="279.41" y="536.99" width="36.47" height="4.29" fill="#287b8d"/><rect x="315.58" y="536.99" width="16.38" height="4.29" fill="#31668d"/><rect x="331.66" y="536.99" width="12.36" height="4.29" fill="#287b8d"/><rect x="343.72" y="536.99" width="8.34" height="4.29" fill="#31668d"/><rect x="351.75" y="536.99" width="4.32" height="4.29" fill="#3b518b"/><rect x="355.77" y="536.99" width="8.34" height="4.29" fill="#461d6d"/><rect x="363.81" y="536.99" width="40.49" height="4.29" fill="#440154"/><rect x="255.30" y="540.98" width="20.39" height="4.29" fill="#31668d"/><rect x="275.39" y="540.98" width="40.49" height="4.29" fill="#287b8d"/><rect x="315.58" y="540.98" width="16.38" height="4.29" fill="#31668d"/><rect x="331.66" y="540.98" width="8.34" height="4.29" fill="#287b8d"/><rect x="339.70" y="540.98" width="12.36" height="4.29" fill="#31668d"/><rect x="351.75" y="540.98" width="4.32" height="4.29" fill="#3b518b"/><rect x="355.77" y="540.98" width="4.32" height="4.29" fill="#461d6d"/><rect x="359.79" y="540.98" width="20.39" height="4.29" fill="#440154"/><rect x="379.89" y="540.98" width="12.36" height="4.29" fill="#461d6d"/><rect x="391.94" y="540.98" width="12.36" height="4.29" fill="#440154"/><rect x="255.30" y="544.97" width="28.43" height="4.29" fill="#287b8d"/><rect x="283.43" y="544.97" width="20.39" height="4.29" fill="#21908d"/><rect x="303.53" y="544.97" width="24.41" height="4.29" fill="#287b8d"/><rect x="327.64" y="544.97" width="16.38" height="4.29" fill="#31668d"/><rect x="343.72" y="544.97" width="8.34" height="4.29" fill="#3b518b"/><rect x="351.75" y="544.97" width="4.32" height="4.29" fill="#43387f"/><rect x="355.77" y="544.97" width="20.39" height="4.29" fill="#440154"/><rect x="375.87" y="544.97" width="4.32" height="4.29" fill="#461d6d"/><rect x="379.89" y="544.97" width="12.36" height="4.29" fill="#43387f"/><rect x="391.94" y="544.97" width="12.36" height="4.29" fill="#461d6d"/><rect x="255.30" y="548.96" width="24.41" height="4.29" fill="#287b8d"/><rect x="279.41" y="548.96" width="28.43" height="4.29" fill="#21908d"/><rect x="307.55" y="548.96" width="24.41" height="4.29" fill="#287b8d"/><rect x="331.66" y="548.96" width="12.36" height="4.29" fill="#31668d"/><rect x="343.72" y="548.96" width="8.34" height="4.29" fill="#3b518b"/><rect x="351.75" y="548.96" width="4.32" height="4.29" fill="#461d6d"/><rect x="355.77" y="548.96" width="20.39" height="4.29" fill="#440154"/><rect x="375.87" y="548.96" width="4.32" height="4.29" fill="#461d6d"/><rect x="379.89" y="548.96" width="12.36" height="4.29" fill="#3b518b"/><rect x="391.94" y="548.96" width="12.36" height="4.29" fill="#461d6d"/><rect x="255.30" y="552.95" width="28.43" height="4.29" fill="#287b8d"/><rect x="283.43" y="552.95" width="8.34" height="4.29" fill="#21908d"/><rect x="291.47" y="552.95" width="36.47" height="4.29" fill="#287b8d"/><rect x="327.64" y="552.95" width="12.36" height="4.29" fill="#31668d"/><rect x="339.70" y="552.95" width="8.34" height="4.29" fill="#3b518b"/><rect x="347.74" y="552.95" width="4.32" height="4.29" fill="#43387f"/><rect x="351.75" y="552.95" width="4.32" height="4.29" fill="#461d6d"/><rect x="355.77" y="552.95" width="20.39" height="4.29" fill="#440154"/><rect x="375.87" y="552.95" width="4.32" height="4.29" fill="#461d6d"/><rect x="379.89" y="552.95" width="12.36" height="4.29" fill="#3b518b"/><rect x="391.94" y="552.95" width="12.36" height="4.29" fill="#43387f"/><rect x="255.30" y="556.94" width="16.38" height="4.29" fill="#287b8d"/><rect x="271.38" y="556.94" width="24.41" height="4.29" fill="#31668d"/><rect x="295.49" y="556.94" width="12.36" height="4.29" fill="#3b518b"/><rect x="307.55" y="556.94" width="8.34" height="4.29" fill="#43387f"/><rect x="315.58" y="556.94" width="4.32" height="4.29" fill="#3b518b"/><rect x="319.60" y="556.94" width="20.39" height="4.29" fill="#31668d"/><rect x="339.70" y="556.94" width="4.32" height="4.29" fill="#3b518b"/><rect x="343.72" y="556.94" width="4.32" height="4.29" fill="#43387f"/><rect x="347.74" y="556.94" width="8.34" height="4.29" fill="#461d6d"/><rect x="355.77" y="556.94" width="12.36" height="4.29" fill="#440154"/><rect x="367.83" y="556.94" width="8.34" height="4.29" fill="#461d6d"/><rect x="375.87" y="556.94" width="4.32" height="4.29" fill="#43387f"/><rect x="379.89" y="556.94" width="8.34" height="4.29" fill="#3b518b"/><rect x="387.92" y="556.94" width="16.38" height="4.29" fill="#31668d"/><rect x="255.30" y="560.92" width="12.36" height="4.29" fill="#287b8d"/><rect x="267.36" y="560.92" width="20.39" height="4.29" fill="#31668d"/><rect x="287.45" y="560.92" width="4.32" height="4.29" fill="#3b518b"/><rect x="291.47" y="560.92" width="4.32" height="4.29" fill="#43387f"/><rect x="295.49" y="560.92" width="8.34" height="4.29" fill="#461d6d"/><rect x="303.53" y="560.92" width="12.36" height="4.29" fill="#440154"/><rect x="315.58" y="560.92" width="4.32" height="4.29" fill="#43387f"/><rect x="319.60" y="560.92" width="20.39" height="4.29" fill="#3b518b"/><rect x="339.70" y="560.92" width="4.32" height="4.29" fill="#43387f"/><rect x="343.72" y="560.92" width="8.34" height="4.29" fill="#461d6d"/><rect x="351.75" y="560.92" width="16.38" height="4.29" fill="#440154"/><rect x="367.83" y="560.92" width="4.32" height="4.29" fill="#461d6d"/><rect x="371.85" y="560.92" width="8.34" height="4.29" fill="#43387f"/><rect x="379.89" y="560.92" width="4.32" height="4.29" fill="#3b518b"/><rect x="383.91" y="560.92" width="8.34" height="4.29" fill="#31668d"/><rect x="391.94" y="560.92" width="12.36" height="4.29" fill="#287b8d"/><rect x="255.30" y="564.91" width="8.34" height="4.29" fill="#287b8d"/><rect x="263.34" y="564.91" width="24.41" height="4.29" fill="#31668d"/><rect x="287.45" y="564.91" width="4.32" height="4.29" fill="#3b518b"/><rect x="291.47" y="564.91" width="4.32" height="4.29" fill="#43387f"/><rect x="295.49" y="564.91" width="20.39" height="4.29" fill="#461d6d"/><rect x="315.58" y="564.91" width="4.32" height="4.29" fill="#3b518b"/><rect x="319.60" y="564.91" width="16.38" height="4.29" fill="#31668d"/><rect x="335.68" y="564.91" width="8.34" height="4.29" fill="#3b518b"/><rect x="343.72" y="564.91" width="4.32" height="4.29" fill="#43387f"/><rect x="347.74" y="564.91" width="8.34" height="4.29" fill="#461d6d"/><rect x="355.77" y="564.91" width="12.36" height="4.29" fill="#440154"/><rect x="367.83" y="564.91" width="4.32" height="4.29" fill="#461d6d"/><rect x="371.85" y="564.91" width="8.34" height="4.29" fill="#43387f"/><rect x="379.89" y="564.91" width="4.32" height="4.29" fill="#3b518b"/><rect x="383.91" y="564.91" width="8.34" height="4.29" fill="#31668d"/><rect x="391.94" y="564.91" width="12.36" height="4.29" fill="#287b8d"/><rect x="255.30" y="568.90" width="32.45" height="4.29" fill="#31668d"/><rect x="287.45" y="568.90" width="8.34" height="4.29" fill="#3b518b"/><rect x="295.49" y="568.90" width="8.34" height="4.29" fill="#43387f"/><rect x="303.53" y="568.90" width="4.32" height="4.29" fill="#3b518b"/><rect x="307.55" y="568.90" width="8.34" height="4.29" fill="#31668d"/><rect x="315.58" y="568.90" width="4.32" height="4.29" fill="#287b8d"/><rect x="319.60" y="568.90" width="4.32" height="4.29" fill="#21908d"/><rect x="323.62" y="568.90" width="8.34" height="4.29" fill="#287b8d"/><rect x="331.66" y="568.90" width="12.36" height="4.29" fill="#31668d"/><rect x="343.72" y="568.90" width="8.34" height="4.29" fill="#3b518b"/><rect x="351.75" y="568.90" width="4.32" height="4.29" fill="#43387f"/><rect x="355.77" y="568.90" width="12.36" height="4.29" fill="#461d6d"/><rect x="367.83" y="568.90" width="12.36" height="4.29" fill="#43387f"/><rect x="379.89" y="568.90" width="4.32" height="4.29" fill="#3b518b"/><rect x="383.91" y="568.90" width="8.34" height="4.29" fill="#31668d"/><rect x="391.94" y="568.90" width="12.36" height="4.29" fill="#287b8d"/><rect x="255.30" y="572.89" width="32.45" height="4.29" fill="#31668d"/><rect x="287.45" y="572.89" width="16.38" height="4.29" fill="#3b518b"/><rect x="303.53" y="572.89" width="4.32" height="4.29" fill="#287b8d"/><rect x="307.55" y="572.89" width="8.34" height="4.29" fill="#21908d"/><rect x="315.58" y="572.89" width="12.36" height="4.29" fill="#25a385"/><rect x="327.64" y="572.89" width="4.32" height="4.29" fill="#21908d"/><rect x="331.66" y="572.89" width="8.34" height="4.29" fill="#287b8d"/><rect x="339.70" y="572.89" width="8.34" height="4.29" fill="#31668d"/><rect x="347.74" y="572.89" width="8.34" height="4.29" fill="#3b518b"/><rect x="355.77" y="572.89" width="24.41" height="4.29" fill="#43387f"/><rect x="379.89" y="572.89" width="4.32" height="4.29" fill="#3b518b"/><rect x="383.91" y="572.89" width="8.34" height="4.29" fill="#31668d"/><rect x="391.94" y="572.89" width="12.36" height="4.29" fill="#287b8d"/><rect x="255.30" y="576.88" width="48.53" height="4.29" fill="#31668d"/><rect x="303.53" y="576.88" width="4.32" height="4.29" fill="#287b8d"/><rect x="307.55" y="576.88" width="12.36" height="4.29" fill="#25a385"/><rect x="319.60" y="576.88" width="8.34" height="4.29" fill="#38b677"/><rect x="327.64" y="576.88" width="4.32" height="4.29" fill="#21908d"/><rect x="331.66" y="576.88" width="8.34" height="4.29" fill="#287b8d"/><rect x="339.70" y="576.88" width="12.36" height="4.29" fill="#31668d"/><rect x="351.75" y="576.88" width="4.32" height="4.29" fill="#3b518b"/><rect x="355.77" y="576.88" width="24.41" height="4.29" fill="#43387f"/><rect x="379.89" y="576.88" width="8.34" height="4.29" fill="#3b518b"/><rect x="387.92" y="576.88" width="4.32" height="4.29" fill="#31668d"/><rect x="391.94" y="576.88" width="12.36" height="4.29" fill="#287b8d"/><rect x="255.30" y="580.87" width="12.36" height="4.29" fill="#3b518b"/><rect x="267.36" y="580.87" width="24.41" height="4.29" fill="#31668d"/><rect x="291.47" y="580.87" width="8.34" height="4.29" fill="#287b8d"/><rect x="299.51" y="580.87" width="4.32" height="4.29" fill="#21908d"/><rect x="303.53" y="580.87" width="4.32" height="4.29" fill="#38b677"/><rect x="307.55" y="580.87" width="8.34" height="4.29" fill="#5cc863"/><rect x="315.58" y="580.87" width="12.36" height="4.29" fill="#90d542"/><rect x="327.64" y="580.87" width="4.32" height="4.29" fill="#38b677"/><rect x="331.66" y="580.87" width="8.34" height="4.29" fill="#21908d"/><rect x="339.70" y="580.87" width="4.32" height="4.29" fill="#287b8d"/><rect x="343.72" y="580.87" width="8.34" height="4.29" fill="#31668d"/><rect x="351.75" y="580.87" width="12.36" height="4.29" fill="#3b518b"/><rect x="363.81" y="580.87" width="16.38" height="4.29" fill="#43387f"/><rect x="379.89" y="580.87" width="8.34" height="4.29" fill="#3b518b"/><rect x="387.92" y="580.87" width="8.34" height="4.29" fill="#31668d"/><rect x="395.96" y="580.87" width="8.34" height="4.29" fill="#287b8d"/><rect x="255.30" y="584.86" width="16.38" height="4.29" fill="#3b518b"/><rect x="271.38" y="584.86" width="16.38" height="4.29" fill="#31668d"/><rect x="287.45" y="584.86" width="4.32" height="4.29" fill="#287b8d"/><rect x="291.47" y="584.86" width="4.32" height="4.29" fill="#21908d"/><rect x="295.49" y="584.86" width="4.32" height="4.29" fill="#25a385"/><rect x="299.51" y="584.86" width="4.32" height="4.29" fill="#38b677"/><rect x="303.53" y="584.86" width="4.32" height="4.29" fill="#5cc863"/><rect x="307.55" y="584.86" width="8.34" height="4.29" fill="#c5df2d"/><rect x="315.58" y="584.86" width="8.34" height="4.29" fill="#fde725"/><rect x="323.62" y="584.86" width="4.32" height="4.29" fill="#c5df2d"/><rect x="327.64" y="584.86" width="4.32" height="4.29" fill="#5cc863"/><rect x="331.66" y="584.86" width="4.32" height="4.29" fill="#25a385"/><rect x="335.68" y="584.86" width="4.32" height="4.29" fill="#21908d"/><rect x="339.70" y="584.86" width="4.32" height="4.29" fill="#287b8d"/><rect x="343.72" y="584.86" width="12.36" height="4.29" fill="#31668d"/><rect x="355.77" y="584.86" width="12.36" height="4.29" fill="#3b518b"/><rect x="367.83" y="584.86" width="12.36" height="4.29" fill="#43387f"/><rect x="379.89" y="584.86" width="12.36" height="4.29" fill="#3b518b"/><rect x="391.94" y="584.86" width="12.36" height="4.29" fill="#31668d"/><rect x="255.30" y="588.85" width="16.38" height="4.29" fill="#3b518b"/><rect x="271.38" y="588.85" width="16.38" height="4.29" fill="#31668d"/><rect x="287.45" y="588.85" width="4.32" height="4.29" fill="#287b8d"/><rect x="291.47" y="588.85" width="4.32" height="4.29" fill="#21908d"/><rect x="295.49" y="588.85" width="4.32" height="4.29" fill="#25a385"/><rect x="299.51" y="588.85" width="4.32" height="4.29" fill="#38b677"/><rect x="303.53" y="588.85" width="4.32" height="4.29" fill="#90d542"/><rect x="307.55" y="588.85" width="4.32" height="4.29" fill="#c5df2d"/><rect x="311.56" y="588.85" width="16.38" height="4.29" fill="#fde725"/><rect x="327.64" y="588.85" width="4.32" height="4.29" fill="#90d542"/><rect x="331.66" y="588.85" width="4.32" height="4.29" fill="#38b677"/><rect x="335.68" y="588.85" width="4.32" height="4.29" fill="#25a385"/><rect x="339.70" y="588.85" width="4.32" height="4.29" fill="#21908d"/><rect x="343.72" y="588.85" width="4.32" height="4.29" fill="#287b8d"/><rect x="347.74" y="588.85" width="8.34" height="4.29" fill="#31668d"/><rect x="355.77" y="588.85" width="12.36" height="4.29" fill="#3b518b"/><rect x="367.83" y="588.85" width="20.39" height="4.29" fill="#43387f"/><rect x="387.92" y="588.85" width="4.32" height="4.29" fill="#3b518b"/><rect x="391.94" y="588.85" width="12.36" height="4.29" fill="#31668d"/><rect x="255.30" y="592.84" width="8.34" height="4.29" fill="#43387f"/><rect x="263.34" y="592.84" width="12.36" height="4.29" fill="#3b518b"/><rect x="275.39" y="592.84" width="12.36" height="4.29" fill="#31668d"/><rect x="287.45" y="592.84" width="4.32" height="4.29" fill="#287b8d"/><rect x="291.47" y="592.84" width="4.32" height="4.29" fill="#21908d"/><rect x="295.49" y="592.84" width="4.32" height="4.29" fill="#25a385"/><rect x="299.51" y="592.84" width="4.32" height="4.29" fill="#38b677"/><rect x="303.53" y="592.84" width="4.32" height="4.29" fill="#90d542"/><rect x="307.55" y="592.84" width="20.39" height="4.29" fill="#fde725"/><rect x="327.64" y="592.84" width="4.32" height="4.29" fill="#c5df2d"/><rect x="331.66" y="592.84" width="4.32" height="4.29" fill="#90d542"/><rect x="335.68" y="592.84" width="4.32" height="4.29" fill="#5cc863"/><rect x="339.70" y="592.84" width="4.32" height="4.29" fill="#25a385"/><rect x="343.72" y="592.84" width="8.34" height="4.29" fill="#287b8d"/><rect x="351.75" y="592.84" width="4.32" height="4.29" fill="#31668d"/><rect x="355.77" y="592.84" width="8.34" height="4.29" fill="#3b518b"/><rect x="363.81" y="592.84" width="4.32" height="4.29" fill="#43387f"/><rect x="367.83" y="592.84" width="4.32" height="4.29" fill="#461d6d"/><rect x="371.85" y="592.84" width="8.34" height="4.29" fill="#440154"/><rect x="379.89" y="592.84" width="8.34" height="4.29" fill="#461d6d"/><rect x="387.92" y="592.84" width="4.32" height="4.29" fill="#43387f"/><rect x="391.94" y="592.84" width="4.32" height="4.29" fill="#3b518b"/><rect x="395.96" y="592.84" width="8.34" height="4.29" fill="#31668d"/><rect x="255.30" y="596.83" width="12.36" height="4.29" fill="#43387f"/><rect x="267.36" y="596.83" width="8.34" height="4.29" fill="#3b518b"/><rect x="275.39" y="596.83" width="8.34" height="4.29" fill="#31668d"/><rect x="283.43" y="596.83" width="8.34" height="4.29" fill="#287b8d"/><rect x="291.47" y="596.83" width="4.32" height="4.29" fill="#21908d"/><rect x="295.49" y="596.83" width="8.34" height="4.29" fill="#25a385"/><rect x="303.53" y="596.83" width="4.32" height="4.29" fill="#90d542"/><rect x="307.55" y="596.83" width="28.43" height="4.29" fill="#fde725"/><rect x="335.68" y="596.83" width="4.32" height="4.29" fill="#c5df2d"/><rect x="339.70" y="596.83" width="4.32" height="4.29" fill="#5cc863"/><rect x="343.72" y="596.83" width="4.32" height="4.29" fill="#21908d"/><rect x="347.74" y="596.83" width="4.32" height="4.29" fill="#287b8d"/><rect x="351.75" y="596.83" width="4.32" height="4.29" fill="#31668d"/><rect x="355.77" y="596.83" width="8.34" height="4.29" fill="#3b518b"/><rect x="363.81" y="596.83" width="4.32" height="4.29" fill="#461d6d"/><rect x="367.83" y="596.83" width="20.39" height="4.29" fill="#440154"/><rect x="387.92" y="596.83" width="4.32" height="4.29" fill="#461d6d"/><rect x="391.94" y="596.83" width="4.32" height="4.29" fill="#3b518b"/><rect x="395.96" y="596.83" width="8.34" height="4.29" fill="#31668d"/><rect x="255.30" y="600.82" width="12.36" height="4.29" fill="#43387f"/><rect x="267.36" y="600.82" width="12.36" height="4.29" fill="#3b518b"/><rect x="279.41" y="600.82" width="8.34" height="4.29" fill="#31668d"/><rect x="287.45" y="600.82" width="4.32" height="4.29" fill="#287b8d"/><rect x="291.47" y="600.82" width="8.34" height="4.29" fill="#21908d"/><rect x="299.51" y="600.82" width="4.32" height="4.29" fill="#25a385"/><rect x="303.53" y="600.82" width="4.32" height="4.29" fill="#90d542"/><rect x="307.55" y="600.82" width="32.45" height="4.29" fill="#fde725"/><rect x="339.70" y="600.82" width="4.32" height="4.29" fill="#5cc863"/><rect x="343.72" y="600.82" width="4.32" height="4.29" fill="#21908d"/><rect x="347.74" y="600.82" width="4.32" height="4.29" fill="#287b8d"/><rect x="351.75" y="600.82" width="4.32" height="4.29" fill="#31668d"/><rect x="355.77" y="600.82" width="8.34" height="4.29" fill="#3b518b"/><rect x="363.81" y="600.82" width="4.32" height="4.29" fill="#461d6d"/><rect x="367.83" y="600.82" width="24.41" height="4.29" fill="#440154"/><rect x="391.94" y="600.82" width="4.32" height="4.29" fill="#43387f"/><rect x="395.96" y="600.82" width="8.34" height="4.29" fill="#3b518b"/><rect x="255.30" y="604.81" width="28.43" height="4.29" fill="#3b518b"/><rect x="283.43" y="604.81" width="8.34" height="4.29" fill="#31668d"/><rect x="291.47" y="604.81" width="4.32" height="4.29" fill="#287b8d"/><rect x="295.49" y="604.81" width="8.34" height="4.29" fill="#21908d"/><rect x="303.53" y="604.81" width="4.32" height="4.29" fill="#38b677"/><rect x="307.55" y="604.81" width="4.32" height="4.29" fill="#90d542"/><rect x="311.56" y="604.81" width="8.34" height="4.29" fill="#c5df2d"/><rect x="319.60" y="604.81" width="20.39" height="4.29" fill="#fde725"/><rect x="339.70" y="604.81" width="4.32" height="4.29" fill="#5cc863"/><rect x="343.72" y="604.81" width="8.34" height="4.29" fill="#21908d"/><rect x="351.75" y="604.81" width="4.32" height="4.29" fill="#287b8d"/><rect x="355.77" y="604.81" width="8.34" height="4.29" fill="#3b518b"/><rect x="363.81" y="604.81" width="4.32" height="4.29" fill="#461d6d"/><rect x="367.83" y="604.81" width="24.41" height="4.29" fill="#440154"/><rect x="391.94" y="604.81" width="4.32" height="4.29" fill="#43387f"/><rect x="395.96" y="604.81" width="8.34" height="4.29" fill="#3b518b"/><rect x="255.30" y="608.79" width="16.38" height="4.29" fill="#3b518b"/><rect x="271.38" y="608.79" width="8.34" height="4.29" fill="#43387f"/><rect x="279.41" y="608.79" width="12.36" height="4.29" fill="#3b518b"/><rect x="291.47" y="608.79" width="4.32" height="4.29" fill="#31668d"/><rect x="295.49" y="608.79" width="4.32" height="4.29" fill="#287b8d"/><rect x="299.51" y="608.79" width="4.32" height="4.29" fill="#21908d"/><rect x="303.53" y="608.79" width="4.32" height="4.29" fill="#25a385"/><rect x="307.55" y="608.79" width="4.32" height="4.29" fill="#5cc863"/><rect x="311.56" y="608.79" width="4.32" height="4.29" fill="#90d542"/><rect x="315.58" y="608.79" width="4.32" height="4.29" fill="#c5df2d"/><rect x="319.60" y="608.79" width="20.39" height="4.29" fill="#fde725"/><rect x="339.70" y="608.79" width="4.32" height="4.29" fill="#5cc863"/><rect x="343.72" y="608.79" width="4.32" height="4.29" fill="#25a385"/><rect x="347.74" y="608.79" width="4.32" height="4.29" fill="#21908d"/><rect x="351.75" y="608.79" width="4.32" height="4.29" fill="#287b8d"/><rect x="355.77" y="608.79" width="8.34" height="4.29" fill="#3b518b"/><rect x="363.81" y="608.79" width="4.32" height="4.29" fill="#461d6d"/><rect x="367.83" y="608.79" width="24.41" height="4.29" fill="#440154"/><rect x="391.94" y="608.79" width="4.32" height="4.29" fill="#461d6d"/><rect x="395.96" y="608.79" width="8.34" height="4.29" fill="#43387f"/><rect x="255.30" y="612.78" width="12.36" height="4.29" fill="#3b518b"/><rect x="267.36" y="612.78" width="16.38" height="4.29" fill="#43387f"/><rect x="283.43" y="612.78" width="8.34" height="4.29" fill="#3b518b"/><rect x="291.47" y="612.78" width="4.32" height="4.29" fill="#31668d"/><rect x="295.49" y="612.78" width="8.34" height="4.29" fill="#287b8d"/><rect x="303.53" y="612.78" width="4.32" height="4.29" fill="#25a385"/><rect x="307.55" y="612.78" width="8.34" height="4.29" fill="#5cc863"/><rect x="315.58" y="612.78" width="4.32" height="4.29" fill="#90d542"/><rect x="319.60" y="612.78" width="16.38" height="4.29" fill="#fde725"/><rect x="335.68" y="612.78" width="4.32" height="4.29" fill="#c5df2d"/><rect x="339.70" y="612.78" width="4.32" height="4.29" fill="#5cc863"/><rect x="343.72" y="612.78" width="4.32" height="4.29" fill="#25a385"/><rect x="347.74" y="612.78" width="4.32" height="4.29" fill="#21908d"/><rect x="351.75" y="612.78" width="4.32" height="4.29" fill="#287b8d"/><rect x="355.77" y="612.78" width="4.32" height="4.29" fill="#3b518b"/><rect x="359.79" y="612.78" width="4.32" height="4.29" fill="#43387f"/><rect x="363.81" y="612.78" width="4.32" height="4.29" fill="#461d6d"/><rect x="367.83" y="612.78" width="24.41" height="4.29" fill="#440154"/><rect x="391.94" y="612.78" width="4.32" height="4.29" fill="#461d6d"/><rect x="395.96" y="612.78" width="8.34" height="4.29" fill="#43387f"/><rect x="255.30" y="616.77" width="12.36" height="4.29" fill="#43387f"/><rect x="267.36" y="616.77" width="20.39" height="4.29" fill="#461d6d"/><rect x="287.45" y="616.77" width="4.32" height="4.29" fill="#43387f"/><rect x="291.47" y="616.77" width="4.32" height="4.29" fill="#3b518b"/><rect x="295.49" y="616.77" width="8.34" height="4.29" fill="#31668d"/><rect x="303.53" y="616.77" width="4.32" height="4.29" fill="#21908d"/><rect x="307.55" y="616.77" width="4.32" height="4.29" fill="#25a385"/><rect x="311.56" y="616.77" width="4.32" height="4.29" fill="#38b677"/><rect x="315.58" y="616.77" width="4.32" height="4.29" fill="#5cc863"/><rect x="319.60" y="616.77" width="8.34" height="4.29" fill="#c5df2d"/><rect x="327.64" y="616.77" width="12.36" height="4.29" fill="#90d542"/><rect x="339.70" y="616.77" width="4.32" height="4.29" fill="#38b677"/><rect x="343.72" y="616.77" width="4.32" height="4.29" fill="#21908d"/><rect x="347.74" y="616.77" width="4.32" height="4.29" fill="#287b8d"/><rect x="351.75" y="616.77" width="4.32" height="4.29" fill="#31668d"/><rect x="355.77" y="616.77" width="8.34" height="4.29" fill="#43387f"/><rect x="363.81" y="616.77" width="4.32" height="4.29" fill="#461d6d"/><rect x="367.83" y="616.77" width="24.41" height="4.29" fill="#440154"/><rect x="391.94" y="616.77" width="4.32" height="4.29" fill="#461d6d"/><rect x="395.96" y="616.77" width="8.34" height="4.29" fill="#43387f"/><rect x="255.30" y="620.76" width="8.34" height="4.29" fill="#461d6d"/><rect x="263.34" y="620.76" width="28.43" height="4.29" fill="#440154"/><rect x="291.47" y="620.76" width="4.32" height="4.29" fill="#461d6d"/><rect x="295.49" y="620.76" width="4.32" height="4.29" fill="#43387f"/><rect x="299.51" y="620.76" width="4.32" height="4.29" fill="#3b518b"/><rect x="303.53" y="620.76" width="4.32" height="4.29" fill="#31668d"/><rect x="307.55" y="620.76" width="8.34" height="4.29" fill="#21908d"/><rect x="315.58" y="620.76" width="4.32" height="4.29" fill="#38b677"/><rect x="319.60" y="620.76" width="8.34" height="4.29" fill="#90d542"/><rect x="327.64" y="620.76" width="4.32" height="4.29" fill="#5cc863"/><rect x="331.66" y="620.76" width="8.34" height="4.29" fill="#38b677"/><rect x="339.70" y="620.76" width="4.32" height="4.29" fill="#21908d"/><rect x="343.72" y="620.76" width="8.34" height="4.29" fill="#287b8d"/><rect x="351.75" y="620.76" width="4.32" height="4.29" fill="#31668d"/><rect x="355.77" y="620.76" width="4.32" height="4.29" fill="#43387f"/><rect x="359.79" y="620.76" width="4.32" height="4.29" fill="#461d6d"/><rect x="363.81" y="620.76" width="28.43" height="4.29" fill="#440154"/><rect x="391.94" y="620.76" width="4.32" height="4.29" fill="#43387f"/><rect x="395.96" y="620.76" width="8.34" height="4.29" fill="#3b518b"/><rect x="255.30" y="624.75" width="36.47" height="4.29" fill="#440154"/><rect x="291.47" y="624.75" width="4.32" height="4.29" fill="#461d6d"/><rect x="295.49" y="624.75" width="8.34" height="4.29" fill="#43387f"/><rect x="303.53" y="624.75" width="4.32" height="4.29" fill="#31668d"/><rect x="307.55" y="624.75" width="4.32" height="4.29" fill="#287b8d"/><rect x="311.56" y="624.75" width="4.32" height="4.29" fill="#21908d"/><rect x="315.58" y="624.75" width="4.32" height="4.29" fill="#38b677"/><rect x="319.60" y="624.75" width="8.34" height="4.29" fill="#90d542"/><rect x="327.64" y="624.75" width="4.32" height="4.29" fill="#5cc863"/><rect x="331.66" y="624.75" width="8.34" height="4.29" fill="#25a385"/><rect x="339.70" y="624.75" width="4.32" height="4.29" fill="#21908d"/><rect x="343.72" y="624.75" width="8.34" height="4.29" fill="#287b8d"/><rect x="351.75" y="624.75" width="4.32" height="4.29" fill="#3b518b"/><rect x="355.77" y="624.75" width="8.34" height="4.29" fill="#461d6d"/><rect x="363.81" y="624.75" width="28.43" height="4.29" fill="#440154"/><rect x="391.94" y="624.75" width="4.32" height="4.29" fill="#43387f"/><rect x="395.96" y="624.75" width="8.34" height="4.29" fill="#3b518b"/><rect x="255.30" y="628.74" width="24.41" height="4.29" fill="#440154"/><rect x="279.41" y="628.74" width="16.38" height="4.29" fill="#461d6d"/><rect x="295.49" y="628.74" width="8.34" height="4.29" fill="#43387f"/><rect x="303.53" y="628.74" width="4.32" height="4.29" fill="#31668d"/><rect x="307.55" y="628.74" width="8.34" height="4.29" fill="#287b8d"/><rect x="315.58" y="628.74" width="4.32" height="4.29" fill="#25a385"/><rect x="319.60" y="628.74" width="8.34" height="4.29" fill="#38b677"/><rect x="327.64" y="628.74" width="4.32" height="4.29" fill="#25a385"/><rect x="331.66" y="628.74" width="8.34" height="4.29" fill="#21908d"/><rect x="339.70" y="628.74" width="4.32" height="4.29" fill="#287b8d"/><rect x="343.72" y="628.74" width="8.34" height="4.29" fill="#31668d"/><rect x="351.75" y="628.74" width="4.32" height="4.29" fill="#3b518b"/><rect x="355.77" y="628.74" width="8.34" height="4.29" fill="#461d6d"/><rect x="363.81" y="628.74" width="28.43" height="4.29" fill="#440154"/><rect x="391.94" y="628.74" width="4.32" height="4.29" fill="#461d6d"/><rect x="395.96" y="628.74" width="8.34" height="4.29" fill="#43387f"/><rect x="255.30" y="632.73" width="12.36" height="4.29" fill="#440154"/><rect x="267.36" y="632.73" width="8.34" height="4.29" fill="#461d6d"/><rect x="275.39" y="632.73" width="28.43" height="4.29" fill="#43387f"/><rect x="303.53" y="632.73" width="4.32" height="4.29" fill="#31668d"/><rect x="307.55" y="632.73" width="12.36" height="4.29" fill="#287b8d"/><rect x="319.60" y="632.73" width="8.34" height="4.29" fill="#21908d"/><rect x="327.64" y="632.73" width="12.36" height="4.29" fill="#287b8d"/><rect x="339.70" y="632.73" width="4.32" height="4.29" fill="#31668d"/><rect x="343.72" y="632.73" width="8.34" height="4.29" fill="#3b518b"/><rect x="351.75" y="632.73" width="4.32" height="4.29" fill="#43387f"/><rect x="355.77" y="632.73" width="8.34" height="4.29" fill="#461d6d"/><rect x="363.81" y="632.73" width="40.49" height="4.29" fill="#440154"/><rect x="255.30" y="636.72" width="12.36" height="4.29" fill="#440154"/><rect x="267.36" y="636.72" width="4.32" height="4.29" fill="#461d6d"/><rect x="271.38" y="636.72" width="12.36" height="4.29" fill="#43387f"/><rect x="283.43" y="636.72" width="8.34" height="4.29" fill="#3b518b"/><rect x="291.47" y="636.72" width="12.36" height="4.29" fill="#43387f"/><rect x="303.53" y="636.72" width="8.34" height="4.29" fill="#31668d"/><rect x="311.56" y="636.72" width="20.39" height="4.29" fill="#287b8d"/><rect x="331.66" y="636.72" width="12.36" height="4.29" fill="#31668d"/><rect x="343.72" y="636.72" width="8.34" height="4.29" fill="#3b518b"/><rect x="351.75" y="636.72" width="4.32" height="4.29" fill="#43387f"/><rect x="355.77" y="636.72" width="8.34" height="4.29" fill="#461d6d"/><rect x="363.81" y="636.72" width="40.49" height="4.29" fill="#440154"/><rect x="255.30" y="640.71" width="8.34" height="4.29" fill="#440154"/><rect x="263.34" y="640.71" width="4.32" height="4.29" fill="#461d6d"/><rect x="267.36" y="640.71" width="8.34" height="4.29" fill="#43387f"/><rect x="275.39" y="640.71" width="8.34" height="4.29" fill="#3b518b"/><rect x="283.43" y="640.71" width="8.34" height="4.29" fill="#31668d"/><rect x="291.47" y="640.71" width="12.36" height="4.29" fill="#3b518b"/><rect x="303.53" y="640.71" width="12.36" height="4.29" fill="#31668d"/><rect x="315.58" y="640.71" width="8.34" height="4.29" fill="#287b8d"/><rect x="323.62" y="640.71" width="8.34" height="4.29" fill="#31668d"/><rect x="331.66" y="640.71" width="8.34" height="4.29" fill="#3b518b"/><rect x="339.70" y="640.71" width="4.32" height="4.29" fill="#43387f"/><rect x="343.72" y="640.71" width="48.53" height="4.29" fill="#461d6d"/><rect x="391.94" y="640.71" width="12.36" height="4.29" fill="#440154"/><rect x="255.30" y="644.70" width="8.34" height="4.29" fill="#461d6d"/><rect x="263.34" y="644.70" width="4.32" height="4.29" fill="#43387f"/><rect x="267.36" y="644.70" width="8.34" height="4.29" fill="#3b518b"/><rect x="275.39" y="644.70" width="48.53" height="4.29" fill="#31668d"/><rect x="323.62" y="644.70" width="4.32" height="4.29" fill="#3b518b"/><rect x="327.64" y="644.70" width="4.32" height="4.29" fill="#43387f"/><rect x="331.66" y="644.70" width="4.32" height="4.29" fill="#461d6d"/><rect x="335.68" y="644.70" width="20.39" height="4.29" fill="#440154"/><rect x="355.77" y="644.70" width="8.34" height="4.29" fill="#461d6d"/><rect x="363.81" y="644.70" width="4.32" height="4.29" fill="#43387f"/><rect x="367.83" y="644.70" width="20.39" height="4.29" fill="#3b518b"/><rect x="387.92" y="644.70" width="4.32" height="4.29" fill="#43387f"/><rect x="391.94" y="644.70" width="4.32" height="4.29" fill="#461d6d"/><rect x="395.96" y="644.70" width="8.34" height="4.29" fill="#440154"/><rect x="255.30" y="648.69" width="12.36" height="4.29" fill="#43387f"/><rect x="267.36" y="648.69" width="4.32" height="4.29" fill="#3b518b"/><rect x="271.38" y="648.69" width="12.36" height="4.29" fill="#31668d"/><rect x="283.43" y="648.69" width="8.34" height="4.29" fill="#287b8d"/><rect x="291.47" y="648.69" width="28.43" height="4.29" fill="#31668d"/><rect x="319.60" y="648.69" width="8.34" height="4.29" fill="#3b518b"/><rect x="327.64" y="648.69" width="4.32" height="4.29" fill="#461d6d"/><rect x="331.66" y="648.69" width="24.41" height="4.29" fill="#440154"/><rect x="355.77" y="648.69" width="8.34" height="4.29" fill="#461d6d"/><rect x="363.81" y="648.69" width="4.32" height="4.29" fill="#43387f"/><rect x="367.83" y="648.69" width="4.32" height="4.29" fill="#3b518b"/><rect x="371.85" y="648.69" width="4.32" height="4.29" fill="#31668d"/><rect x="375.87" y="648.69" width="12.36" height="4.29" fill="#3b518b"/><rect x="387.92" y="648.69" width="4.32" height="4.29" fill="#43387f"/><rect x="391.94" y="648.69" width="4.32" height="4.29" fill="#461d6d"/><rect x="395.96" y="648.69" width="8.34" height="4.29" fill="#440154"/><rect x="255.30" y="652.68" width="12.36" height="4.29" fill="#43387f"/><rect x="267.36" y="652.68" width="4.32" height="4.29" fill="#3b518b"/><rect x="271.38" y="652.68" width="12.36" height="4.29" fill="#31668d"/><rect x="283.43" y="652.68" width="4.32" height="4.29" fill="#287b8d"/><rect x="287.45" y="652.68" width="28.43" height="4.29" fill="#31668d"/><rect x="315.58" y="652.68" width="12.36" height="4.29" fill="#3b518b"/><rect x="327.64" y="652.68" width="4.32" height="4.29" fill="#461d6d"/><rect x="331.66" y="652.68" width="24.41" height="4.29" fill="#440154"/><rect x="355.77" y="652.68" width="8.34" height="4.29" fill="#461d6d"/><rect x="363.81" y="652.68" width="4.32" height="4.29" fill="#43387f"/><rect x="367.83" y="652.68" width="20.39" height="4.29" fill="#3b518b"/><rect x="387.92" y="652.68" width="4.32" height="4.29" fill="#43387f"/><rect x="391.94" y="652.68" width="4.32" height="4.29" fill="#461d6d"/><rect x="395.96" y="652.68" width="8.34" height="4.29" fill="#440154"/><rect x="255.30" y="656.66" width="16.38" height="4.29" fill="#3b518b"/><rect x="271.38" y="656.66" width="36.47" height="4.29" fill="#31668d"/><rect x="307.55" y="656.66" width="12.36" height="4.29" fill="#3b518b"/><rect x="319.60" y="656.66" width="8.34" height="4.29" fill="#43387f"/><rect x="327.64" y="656.66" width="24.41" height="4.29" fill="#461d6d"/><rect x="351.75" y="656.66" width="12.36" height="4.29" fill="#440154"/><rect x="363.81" y="656.66" width="4.32" height="4.29" fill="#461d6d"/><rect x="367.83" y="656.66" width="12.36" height="4.29" fill="#43387f"/><rect x="379.89" y="656.66" width="8.34" height="4.29" fill="#3b518b"/><rect x="387.92" y="656.66" width="4.32" height="4.29" fill="#43387f"/><rect x="391.94" y="656.66" width="4.32" height="4.29" fill="#461d6d"/><rect x="395.96" y="656.66" width="8.34" height="4.29" fill="#440154"/><rect x="255.30" y="660.65" width="16.38" height="4.29" fill="#3b518b"/><rect x="271.38" y="660.65" width="32.45" height="4.29" fill="#31668d"/><rect x="303.53" y="660.65" width="12.36" height="4.29" fill="#3b518b"/><rect x="315.58" y="660.65" width="12.36" height="4.29" fill="#43387f"/><rect x="327.64" y="660.65" width="28.43" height="4.29" fill="#461d6d"/><rect x="355.77" y="660.65" width="8.34" height="4.29" fill="#440154"/><rect x="363.81" y="660.65" width="4.32" height="4.29" fill="#461d6d"/><rect x="367.83" y="660.65" width="12.36" height="4.29" fill="#43387f"/><rect x="379.89" y="660.65" width="8.34" height="4.29" fill="#3b518b"/><rect x="387.92" y="660.65" width="4.32" height="4.29" fill="#43387f"/><rect x="391.94" y="660.65" width="4.32" height="4.29" fill="#461d6d"/><rect x="395.96" y="660.65" width="8.34" height="4.29" fill="#440154"/><rect x="255.30" y="664.64" width="24.41" height="4.29" fill="#43387f"/><rect x="279.41" y="664.64" width="32.45" height="4.29" fill="#3b518b"/><rect x="311.56" y="664.64" width="40.49" height="4.29" fill="#43387f"/><rect x="351.75" y="664.64" width="20.39" height="4.29" fill="#461d6d"/><rect x="371.85" y="664.64" width="16.38" height="4.29" fill="#43387f"/><rect x="387.92" y="664.64" width="4.32" height="4.29" fill="#461d6d"/><rect x="391.94" y="664.64" width="12.36" height="4.29" fill="#440154"/><rect x="255.30" y="668.63" width="36.47" height="4.29" fill="#440154"/><rect x="291.47" y="668.63" width="24.41" height="4.29" fill="#461d6d"/><rect x="315.58" y="668.63" width="12.36" height="4.29" fill="#43387f"/><rect x="327.64" y="668.63" width="4.32" height="4.29" fill="#3b518b"/><rect x="331.66" y="668.63" width="8.34" height="4.29" fill="#31668d"/><rect x="339.70" y="668.63" width="12.36" height="4.29" fill="#3b518b"/><rect x="351.75" y="668.63" width="8.34" height="4.29" fill="#43387f"/><rect x="359.79" y="668.63" width="28.43" height="4.29" fill="#461d6d"/><rect x="387.92" y="668.63" width="16.38" height="4.29" fill="#440154"/><rect x="255.30" y="672.62" width="48.53" height="4.29" fill="#440154"/><rect x="303.53" y="672.62" width="16.38" height="4.29" fill="#461d6d"/><rect x="319.60" y="672.62" width="8.34" height="4.29" fill="#43387f"/><rect x="327.64" y="672.62" width="4.32" height="4.29" fill="#3b518b"/><rect x="331.66" y="672.62" width="20.39" height="4.29" fill="#31668d"/><rect x="351.75" y="672.62" width="4.32" height="4.29" fill="#3b518b"/><rect x="355.77" y="672.62" width="8.34" height="4.29" fill="#43387f"/><rect x="363.81" y="672.62" width="16.38" height="4.29" fill="#461d6d"/><rect x="379.89" y="672.62" width="24.41" height="4.29" fill="#440154"/><rect x="255.30" y="676.61" width="48.53" height="4.29" fill="#440154"/><rect x="303.53" y="676.61" width="16.38" height="4.29" fill="#461d6d"/><rect x="319.60" y="676.61" width="8.34" height="4.29" fill="#43387f"/><rect x="327.64" y="676.61" width="4.32" height="4.29" fill="#3b518b"/><rect x="331.66" y="676.61" width="20.39" height="4.29" fill="#31668d"/><rect x="351.75" y="676.61" width="4.32" height="4.29" fill="#3b518b"/><rect x="355.77" y="676.61" width="8.34" height="4.29" fill="#43387f"/><rect x="363.81" y="676.61" width="16.38" height="4.29" fill="#461d6d"/><rect x="379.89" y="676.61" width="24.41" height="4.29" fill="#440154"/></g><clipPath id="p2"><rect x="255.3" y="533" width="148.7" height="147.6"/></clipPath><g clip-path="url(#p2)"><rect x="279.9" y="557.6" width="98.4" height="98.4" fill="none" stroke="#ff0000" stroke-width="1.1"/><text x="329.1" y="547.3399999999999" font-family="Liberation Sans, sans-serif" font-size="12" fill="#ff0000" text-anchor="middle" >N</text><text x="264.32000000000005" y="611.3" font-family="Liberation Sans, sans-serif" font-size="12" fill="#ff0000" text-anchor="middle" >E</text><path d="M291.6 606.8H321.1M337.1 606.8H366.6M329.1 569.8V598.8M329.1 614.8V643.8" stroke="#ff0000" stroke-width="1.2"/></g><rect x="255.3" y="533" width="148.7" height="147.6" fill="none" stroke="#222" stroke-width="1"/><line x1="251.3" y1="672.4" x2="255.3" y2="672.4" stroke="#222" stroke-width="0.8"/><text x="250.3" y="676.4" font-family="Liberation Sans, sans-serif" font-size="11.5" fill="#000" text-anchor="end" >−4</text><line x1="263.5" y1="680.6" x2="263.5" y2="684.6" stroke="#222" stroke-width="0.8"/><text x="263.5" y="697" font-family="Liberation Sans, sans-serif" font-size="11.5" fill="#000" text-anchor="middle" >−4</text><line x1="251.3" y1="639.6" x2="255.3" y2="639.6" stroke="#222" stroke-width="0.8"/><text x="250.3" y="643.5999999999999" font-family="Liberation Sans, sans-serif" font-size="11.5" fill="#000" text-anchor="end" >−2</text><line x1="296.3" y1="680.6" x2="296.3" y2="684.6" stroke="#222" stroke-width="0.8"/><text x="296.3" y="697" font-family="Liberation Sans, sans-serif" font-size="11.5" fill="#000" text-anchor="middle" >−2</text><line x1="251.3" y1="606.8" x2="255.3" y2="606.8" stroke="#222" stroke-width="0.8"/><text x="250.3" y="610.8" font-family="Liberation Sans, sans-serif" font-size="11.5" fill="#000" text-anchor="end" >0</text><line x1="329.1" y1="680.6" x2="329.1" y2="684.6" stroke="#222" stroke-width="0.8"/><text x="329.1" y="697" font-family="Liberation Sans, sans-serif" font-size="11.5" fill="#000" text-anchor="middle" >0</text><line x1="251.3" y1="574.0" x2="255.3" y2="574.0" stroke="#222" stroke-width="0.8"/><text x="250.3" y="578.0" font-family="Liberation Sans, sans-serif" font-size="11.5" fill="#000" text-anchor="end" >2</text><line x1="361.9" y1="680.6" x2="361.9" y2="684.6" stroke="#222" stroke-width="0.8"/><text x="361.90000000000003" y="697" font-family="Liberation Sans, sans-serif" font-size="11.5" fill="#000" text-anchor="middle" >2</text><line x1="251.3" y1="541.2" x2="255.3" y2="541.2" stroke="#222" stroke-width="0.8"/><text x="250.3" y="545.1999999999999" font-family="Liberation Sans, sans-serif" font-size="11.5" fill="#000" text-anchor="end" >4</text><line x1="394.7" y1="680.6" x2="394.7" y2="684.6" stroke="#222" stroke-width="0.8"/><text x="394.70000000000005" y="697" font-family="Liberation Sans, sans-serif" font-size="11.5" fill="#000" text-anchor="middle" >4</text><text x="329.65" y="525.8" font-family="Liberation Sans, sans-serif" font-size="13.8" fill="#000" text-anchor="middle" >Lineflux Map</text><text x="329.65" y="706.5" font-family="Liberation Sans, sans-serif" font-size="11.5" fill="#000" text-anchor="middle" >s/b: 3.11 +/- 0.078</text><clipPath id="p3"><rect x="440.5" y="532.2" width="148.5" height="148.8"/></clipPath><g clip-path="url(#p3)"><rect x="440.5" y="532.2" width="148.5" height="148.8" filter="url(#nzg2)"/><circle cx="512.1" cy="611.0" r="23" fill="url(#blob2)"/><ellipse cx="537.6" cy="671.5" rx="9" ry="12" fill="#000" opacity="0.13"/><circle cx="511.8" cy="611.3" r="22.4" fill="none" stroke="#f2c200" stroke-width="1.4"/><rect x="504.7" y="604.2" width="13" height="12.3" fill="none" stroke="#0000ff" stroke-width="1.3"/><path d="M477.6 606.5H552.1M514.6 570.0V644.3" stroke="#ff0000" stroke-width="1.2"/><rect x="465.4" y="557.3" width="98.4" height="98.4" fill="none" stroke="#ff0000" stroke-width="1.1"/><text x="514.6" y="547.04" font-family="Liberation Sans, sans-serif" font-size="12" fill="#ff0000" text-anchor="middle" >N</text><text x="449.82000000000005" y="611.0" font-family="Liberation Sans, sans-serif" font-size="12" fill="#ff0000" text-anchor="middle" >E</text></g><rect x="440.5" y="532.2" width="148.5" height="148.8" fill="none" stroke="#222" stroke-width="1"/><line x1="436.5" y1="672.1" x2="440.5" y2="672.1" stroke="#222" stroke-width="0.8"/><text x="435.5" y="676.1" font-family="Liberation Sans, sans-serif" font-size="11.5" fill="#000" text-anchor="end" >−4</text><line x1="449.0" y1="681.0" x2="449.0" y2="685.0" stroke="#222" stroke-width="0.8"/><text x="449.0" y="697" font-family="Liberation Sans, sans-serif" font-size="11.5" fill="#000" text-anchor="middle" >−4</text><line x1="436.5" y1="639.3" x2="440.5" y2="639.3" stroke="#222" stroke-width="0.8"/><text x="435.5" y="643.3" font-family="Liberation Sans, sans-serif" font-size="11.5" fill="#000" text-anchor="end" >−2</text><line x1="481.8" y1="681.0" x2="481.8" y2="685.0" stroke="#222" stroke-width="0.8"/><text x="481.8" y="697" font-family="Liberation Sans, sans-serif" font-size="11.5" fill="#000" text-anchor="middle" >−2</text><line x1="436.5" y1="606.5" x2="440.5" y2="606.5" stroke="#222" stroke-width="0.8"/><text x="435.5" y="610.5" font-family="Liberation Sans, sans-serif" font-size="11.5" fill="#000" text-anchor="end" >0</text><line x1="514.6" y1="681.0" x2="514.6" y2="685.0" stroke="#222" stroke-width="0.8"/><text x="514.6" y="697" font-family="Liberation Sans, sans-serif" font-size="11.5" fill="#000" text-anchor="middle" >0</text><line x1="436.5" y1="573.7" x2="440.5" y2="573.7" stroke="#222" stroke-width="0.8"/><text x="435.5" y="577.7" font-family="Liberation Sans, sans-serif" font-size="11.5" fill="#000" text-anchor="end" >2</text><line x1="547.4" y1="681.0" x2="547.4" y2="685.0" stroke="#222" stroke-width="0.8"/><text x="547.4" y="697" font-family="Liberation Sans, sans-serif" font-size="11.5" fill="#000" text-anchor="middle" >2</text><line x1="436.5" y1="540.9" x2="440.5" y2="540.9" stroke="#222" stroke-width="0.8"/><text x="435.5" y="544.9" font-family="Liberation Sans, sans-serif" font-size="11.5" fill="#000" text-anchor="end" >4</text><line x1="580.2" y1="681.0" x2="580.2" y2="685.0" stroke="#222" stroke-width="0.8"/><text x="580.2" y="697" font-family="Liberation Sans, sans-serif" font-size="11.5" fill="#000" text-anchor="middle" >4</text><text x="514.75" y="525.8" font-family="Liberation Sans, sans-serif" font-size="13.8" fill="#000" text-anchor="middle" >HSC(26.2) r</text><text x="514.75" y="706.5" font-family="Liberation Sans, sans-serif" font-size="11.5" fill="#000" text-anchor="middle" >m:19.4  re:1.4"  s:0.3"</text><text x="514.75" y="718.8" font-family="Liberation Sans, sans-serif" font-size="11.5" fill="#000" text-anchor="middle" >EWr: 1, PLAE: 0.001</text><text transform="translate(70.3,786.2) scale(1,1.09)" font-family="Liberation Mono, monospace" font-size="13" fill="#000" stroke="#000" stroke-width="0.12" >Separation</text><text transform="translate(70.3,800.4) scale(1,1.09)" font-family="Liberation Mono, monospace" font-size="13" fill="#000" stroke="#000" stroke-width="0.12" >Match score</text><text transform="translate(70.3,815.5) scale(1,1.09)" font-family="Liberation Mono, monospace" font-size="13" fill="#000" stroke="#000" stroke-width="0.12" >RA, Dec</text><text transform="translate(70.3,829.8) scale(1,1.09)" font-family="Liberation Mono, monospace" font-size="13" fill="#000" stroke="#000" stroke-width="0.12" >Spec z</text><text transform="translate(70.3,844.5) scale(1,1.09)" font-family="Liberation Mono, monospace" font-size="13" fill="#000" stroke="#000" stroke-width="0.12" >Photo z</text><text transform="translate(70.3,858.75) scale(1,1.09)" font-family="Liberation Mono, monospace" font-size="13" fill="#000" stroke="#000" stroke-width="0.12" >Est LyA rest-EW</text><text transform="translate(70.3,873.4) scale(1,1.09)" font-family="Liberation Mono, monospace" font-size="13" fill="#000" stroke="#000" stroke-width="0.12" >mag</text><text transform="translate(70.3,888.6) scale(1,1.09)" font-family="Liberation Mono, monospace" font-size="13" fill="#000" stroke="#000" stroke-width="0.12" >P(LAE)/P(OII)</text><text transform="translate(287.3,779.1) scale(1,1.09)" font-family="Liberation Mono, monospace" font-size="13" fill="#0000ff" stroke="#0000ff" stroke-width="0.12" >0.329872"</text><text transform="translate(287.3,793.5) scale(1,1.09)" font-family="Liberation Mono, monospace" font-size="13" fill="#0000ff" stroke="#0000ff" stroke-width="0.12" >1.000</text><text transform="translate(287.3,808.2) scale(1,1.09)" font-family="Liberation Mono, monospace" font-size="13" fill="#0000ff" stroke="#0000ff" stroke-width="0.12" >206.975413, 55.125044</text><text transform="translate(287.3,822.7) scale(1,1.09)" font-family="Liberation Mono, monospace" font-size="13" fill="#0000ff" stroke="#0000ff" stroke-width="0.12" >N/A</text><text transform="translate(287.3,837.4) scale(1,1.09)" font-family="Liberation Mono, monospace" font-size="13" fill="#0000ff" stroke="#0000ff" stroke-width="0.12" >N/A</text><text transform="translate(287.3,854) scale(1,1.09)" font-family="Liberation Mono, monospace" font-size="13" fill="#0000ff" stroke="#0000ff" stroke-width="0.12" >1.60(±0.30)Å</text><text transform="translate(287.3,869.9) scale(1,1.09)" font-family="Liberation Mono, monospace" font-size="13" fill="#0000ff" stroke="#0000ff" stroke-width="0.12" >19.41(19.41,19.42)R</text><text x="287.3" y="886.4" font-family="Liberation Sans, sans-serif" font-size="14" fill="#0000ff" text-anchor="start" >0.001</text><text x="329" y="881.6" font-family="Liberation Sans, sans-serif" font-size="9.5" fill="#0000ff" text-anchor="start" textLength="25.8" lengthAdjust="spacingAndGlyphs">0.003</text><text x="329" y="890.9" font-family="Liberation Sans, sans-serif" font-size="9.5" fill="#0000ff" text-anchor="start" textLength="25.8" lengthAdjust="spacingAndGlyphs">0.001</text><text transform="translate(938.5,821) scale(1,1.09)" font-family="Liberation Mono, monospace" font-size="13" fill="#000" stroke="#000" stroke-width="0.12" >Phot z plot not available.</text>
</svg></body></html>
